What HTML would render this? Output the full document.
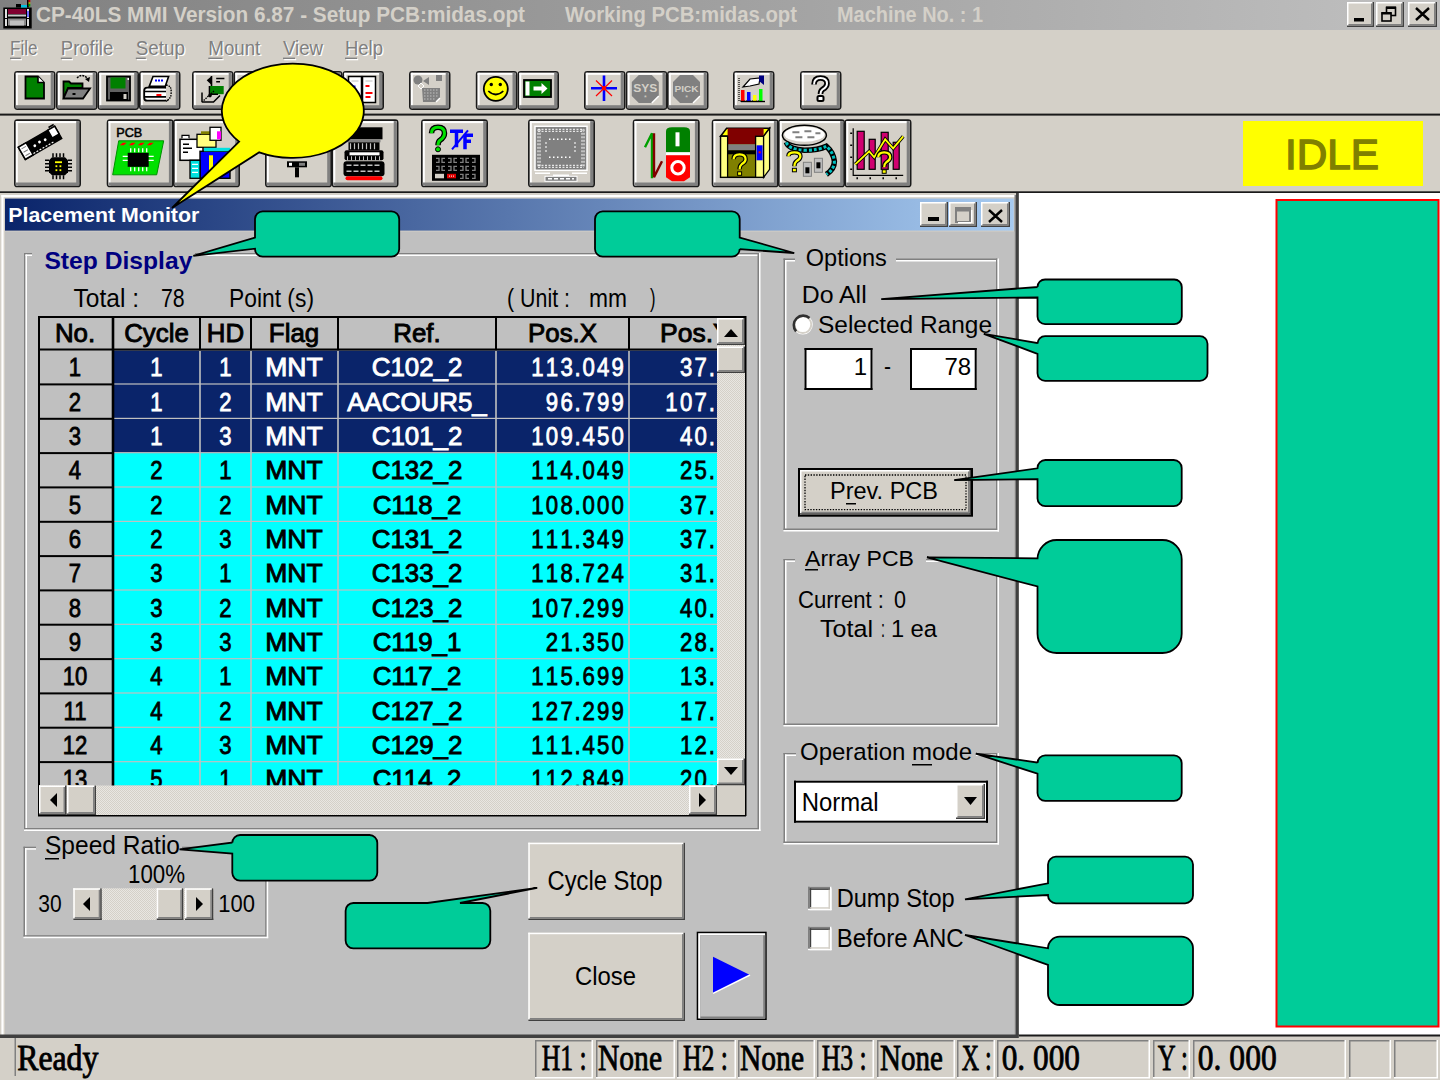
<!DOCTYPE html>
<html><head><meta charset="utf-8"><style>
*{margin:0;padding:0}
html,body{width:1440px;height:1080px;overflow:hidden;background:#d4d0c8}
svg{display:block}
</style></head><body>
<svg width="1440" height="1080" viewBox="0 0 1440 1080">
<defs>
<linearGradient id="gt" x1="0" x2="1" y1="0" y2="0"><stop offset="0" stop-color="#808080"/><stop offset="1" stop-color="#c0c0c0"/></linearGradient>
<linearGradient id="gc" x1="0" x2="1" y1="0" y2="0"><stop offset="0" stop-color="#0a246a"/><stop offset="1" stop-color="#a6caf0"/></linearGradient>
<pattern id="dith" width="2" height="2" patternUnits="userSpaceOnUse"><rect width="2" height="2" fill="#e8e6e2"/><rect width="1" height="1" fill="#d4d0c8"/><rect x="1" y="1" width="1" height="1" fill="#d4d0c8"/></pattern>
</defs>
<rect x="0.0" y="0.0" width="1440.0" height="30.0" fill="url(#gt)" />
<text x="36.0" y="21.9" font-family="Liberation Sans" font-size="21.22" font-weight="bold" fill="#d4d0c8" text-anchor="start" textLength="489.0" lengthAdjust="spacingAndGlyphs">CP-40LS MMI Version 6.87 - Setup PCB:midas.opt</text>
<text x="565.0" y="21.9" font-family="Liberation Sans" font-size="21.22" font-weight="bold" fill="#d4d0c8" text-anchor="start" textLength="232.0" lengthAdjust="spacingAndGlyphs">Working PCB:midas.opt</text>
<text x="837.0" y="21.9" font-family="Liberation Sans" font-size="21.22" font-weight="bold" fill="#d4d0c8" text-anchor="start" textLength="146.0" lengthAdjust="spacingAndGlyphs">Machine No. : 1</text>
<rect x="1347.0" y="2.0" width="27.0" height="25.0" fill="#d4d0c8" />
<rect x="1347.0" y="2.0" width="27.0" height="1.5" fill="#fff" />
<rect x="1347.0" y="2.0" width="1.5" height="25.0" fill="#fff" />
<rect x="1347.0" y="25.5" width="27.0" height="1.5" fill="#404040" />
<rect x="1372.5" y="2.0" width="1.5" height="25.0" fill="#404040" />
<rect x="1348.5" y="24.0" width="24.0" height="1.5" fill="#808080" />
<rect x="1371.0" y="3.5" width="1.5" height="22.0" fill="#808080" />
<rect x="1376.0" y="2.0" width="28.0" height="25.0" fill="#d4d0c8" />
<rect x="1376.0" y="2.0" width="28.0" height="1.5" fill="#fff" />
<rect x="1376.0" y="2.0" width="1.5" height="25.0" fill="#fff" />
<rect x="1376.0" y="25.5" width="28.0" height="1.5" fill="#404040" />
<rect x="1402.5" y="2.0" width="1.5" height="25.0" fill="#404040" />
<rect x="1377.5" y="24.0" width="25.0" height="1.5" fill="#808080" />
<rect x="1401.0" y="3.5" width="1.5" height="22.0" fill="#808080" />
<rect x="1408.0" y="2.0" width="29.0" height="25.0" fill="#d4d0c8" />
<rect x="1408.0" y="2.0" width="29.0" height="1.5" fill="#fff" />
<rect x="1408.0" y="2.0" width="1.5" height="25.0" fill="#fff" />
<rect x="1408.0" y="25.5" width="29.0" height="1.5" fill="#404040" />
<rect x="1435.5" y="2.0" width="1.5" height="25.0" fill="#404040" />
<rect x="1409.5" y="24.0" width="26.0" height="1.5" fill="#808080" />
<rect x="1434.0" y="3.5" width="1.5" height="22.0" fill="#808080" />
<rect x="1354.0" y="18.0" width="10.0" height="3.5" fill="#000" />
<rect x="1386.5" y="7.5" width="9" height="8" fill="none" stroke="#000" stroke-width="1.6"/><rect x="1386" y="6.5" width="10" height="2.5" fill="#000"/>
<rect x="1382" y="13" width="9" height="8" fill="#d4d0c8" stroke="#000" stroke-width="1.6"/><rect x="1381.5" y="12" width="10" height="2.5" fill="#000"/>
<path d="M1416,8 L1429,20 M1429,8 L1416,20" stroke="#000" stroke-width="2.4"/>
<g><rect x="3.3" y="7.5" width="28.4" height="21" fill="#000"/><rect x="8" y="9" width="18" height="5" fill="#800030"/><rect x="8" y="14.5" width="18" height="2" fill="#c8c8c8"/><rect x="8" y="18.5" width="18" height="7" fill="#8c8c8c"/><rect x="10" y="20.5" width="14" height="5" fill="#c0c0c0"/><rect x="5" y="9" width="2" height="17" fill="#e0e0e0"/><rect x="27" y="9" width="2" height="17" fill="#e0e0e0"/><rect x="27" y="11" width="2" height="6" fill="#7070ff"/><rect x="5" y="18" width="2" height="1" fill="#000"/><rect x="27" y="18" width="2" height="1" fill="#000"/><rect x="16" y="4" width="5" height="3.5" fill="#000"/><rect x="21" y="5" width="6" height="2.5" fill="#00c0e0"/><rect x="27" y="0" width="1.8" height="7.5" fill="#000"/><rect x="28.5" y="0" width="1.8" height="2" fill="#c00000"/><rect x="28.5" y="2" width="1.8" height="2" fill="#a0a000"/><rect x="28.5" y="4" width="1.8" height="2.5" fill="#00a000"/></g>
<text x="11.3" y="56.3" font-family="Liberation Sans" font-size="19.33" font-weight="normal" fill="#fff" text-anchor="start" textLength="27.5" lengthAdjust="spacingAndGlyphs">File</text>
<text x="10.0" y="55.0" font-family="Liberation Sans" font-size="19.33" font-weight="normal" fill="#808080" text-anchor="start" textLength="27.5" lengthAdjust="spacingAndGlyphs">File</text>
<rect x="11.2" y="58.9" width="10.8" height="1.4" fill="#fff" />
<rect x="10.0" y="57.6" width="10.8" height="1.4" fill="#808080" />
<text x="62.1" y="56.3" font-family="Liberation Sans" font-size="19.33" font-weight="normal" fill="#fff" text-anchor="start" textLength="52.5" lengthAdjust="spacingAndGlyphs">Profile</text>
<text x="60.8" y="55.0" font-family="Liberation Sans" font-size="19.33" font-weight="normal" fill="#808080" text-anchor="start" textLength="52.5" lengthAdjust="spacingAndGlyphs">Profile</text>
<rect x="62.0" y="58.9" width="11.0" height="1.4" fill="#fff" />
<rect x="60.8" y="57.6" width="11.0" height="1.4" fill="#808080" />
<text x="137.1" y="56.3" font-family="Liberation Sans" font-size="19.33" font-weight="normal" fill="#fff" text-anchor="start" textLength="49.2" lengthAdjust="spacingAndGlyphs">Setup</text>
<text x="135.8" y="55.0" font-family="Liberation Sans" font-size="19.33" font-weight="normal" fill="#808080" text-anchor="start" textLength="49.2" lengthAdjust="spacingAndGlyphs">Setup</text>
<rect x="137.0" y="58.9" width="10.0" height="1.4" fill="#fff" />
<rect x="135.8" y="57.6" width="10.0" height="1.4" fill="#808080" />
<text x="209.6" y="56.3" font-family="Liberation Sans" font-size="19.33" font-weight="normal" fill="#fff" text-anchor="start" textLength="52.0" lengthAdjust="spacingAndGlyphs">Mount</text>
<text x="208.3" y="55.0" font-family="Liberation Sans" font-size="19.33" font-weight="normal" fill="#808080" text-anchor="start" textLength="52.0" lengthAdjust="spacingAndGlyphs">Mount</text>
<rect x="209.5" y="58.9" width="14.2" height="1.4" fill="#fff" />
<rect x="208.3" y="57.6" width="14.2" height="1.4" fill="#808080" />
<text x="284.3" y="56.3" font-family="Liberation Sans" font-size="19.33" font-weight="normal" fill="#fff" text-anchor="start" textLength="40.0" lengthAdjust="spacingAndGlyphs">View</text>
<text x="283.0" y="55.0" font-family="Liberation Sans" font-size="19.33" font-weight="normal" fill="#808080" text-anchor="start" textLength="40.0" lengthAdjust="spacingAndGlyphs">View</text>
<rect x="284.2" y="58.9" width="12.0" height="1.4" fill="#fff" />
<rect x="283.0" y="57.6" width="12.0" height="1.4" fill="#808080" />
<text x="346.3" y="56.3" font-family="Liberation Sans" font-size="19.33" font-weight="normal" fill="#fff" text-anchor="start" textLength="38.0" lengthAdjust="spacingAndGlyphs">Help</text>
<text x="345.0" y="55.0" font-family="Liberation Sans" font-size="19.33" font-weight="normal" fill="#808080" text-anchor="start" textLength="38.0" lengthAdjust="spacingAndGlyphs">Help</text>
<rect x="346.2" y="58.9" width="12.0" height="1.4" fill="#fff" />
<rect x="345.0" y="57.6" width="12.0" height="1.4" fill="#808080" />
<rect x="14.9" y="71.9" width="39.7" height="37.2" rx="2.5" fill="#d4d0c8" stroke="#1a1a1a" stroke-width="1.8"/>
<rect x="15.8" y="72.8" width="37.9" height="2.0" fill="#fff" />
<rect x="15.8" y="72.8" width="2.0" height="35.4" fill="#fff" />
<rect x="15.8" y="105.2" width="37.9" height="3.0" fill="#808080" />
<rect x="50.7" y="72.8" width="3.0" height="35.4" fill="#808080" />
<rect x="56.9" y="71.9" width="39.7" height="37.2" rx="2.5" fill="#d4d0c8" stroke="#1a1a1a" stroke-width="1.8"/>
<rect x="57.8" y="72.8" width="37.9" height="2.0" fill="#fff" />
<rect x="57.8" y="72.8" width="2.0" height="35.4" fill="#fff" />
<rect x="57.8" y="105.2" width="37.9" height="3.0" fill="#808080" />
<rect x="92.7" y="72.8" width="3.0" height="35.4" fill="#808080" />
<rect x="98.4" y="71.9" width="39.7" height="37.2" rx="2.5" fill="#d4d0c8" stroke="#1a1a1a" stroke-width="1.8"/>
<rect x="99.3" y="72.8" width="37.9" height="2.0" fill="#fff" />
<rect x="99.3" y="72.8" width="2.0" height="35.4" fill="#fff" />
<rect x="99.3" y="105.2" width="37.9" height="3.0" fill="#808080" />
<rect x="134.2" y="72.8" width="3.0" height="35.4" fill="#808080" />
<rect x="139.9" y="71.9" width="39.7" height="37.2" rx="2.5" fill="#d4d0c8" stroke="#1a1a1a" stroke-width="1.8"/>
<rect x="140.8" y="72.8" width="37.9" height="2.0" fill="#fff" />
<rect x="140.8" y="72.8" width="2.0" height="35.4" fill="#fff" />
<rect x="140.8" y="105.2" width="37.9" height="3.0" fill="#808080" />
<rect x="175.7" y="72.8" width="3.0" height="35.4" fill="#808080" />
<rect x="192.9" y="71.9" width="39.7" height="37.2" rx="2.5" fill="#d4d0c8" stroke="#1a1a1a" stroke-width="1.8"/>
<rect x="193.8" y="72.8" width="37.9" height="2.0" fill="#fff" />
<rect x="193.8" y="72.8" width="2.0" height="35.4" fill="#fff" />
<rect x="193.8" y="105.2" width="37.9" height="3.0" fill="#808080" />
<rect x="228.7" y="72.8" width="3.0" height="35.4" fill="#808080" />
<rect x="234.4" y="71.9" width="39.7" height="37.2" rx="2.5" fill="#d4d0c8" stroke="#1a1a1a" stroke-width="1.8"/>
<rect x="235.3" y="72.8" width="37.9" height="2.0" fill="#fff" />
<rect x="235.3" y="72.8" width="2.0" height="35.4" fill="#fff" />
<rect x="235.3" y="105.2" width="37.9" height="3.0" fill="#808080" />
<rect x="270.2" y="72.8" width="3.0" height="35.4" fill="#808080" />
<rect x="301.9" y="71.9" width="39.7" height="37.2" rx="2.5" fill="#d4d0c8" stroke="#1a1a1a" stroke-width="1.8"/>
<rect x="302.8" y="72.8" width="37.9" height="2.0" fill="#fff" />
<rect x="302.8" y="72.8" width="2.0" height="35.4" fill="#fff" />
<rect x="302.8" y="105.2" width="37.9" height="3.0" fill="#808080" />
<rect x="337.7" y="72.8" width="3.0" height="35.4" fill="#808080" />
<rect x="343.4" y="71.9" width="39.7" height="37.2" rx="2.5" fill="#d4d0c8" stroke="#1a1a1a" stroke-width="1.8"/>
<rect x="344.3" y="72.8" width="37.9" height="2.0" fill="#fff" />
<rect x="344.3" y="72.8" width="2.0" height="35.4" fill="#fff" />
<rect x="344.3" y="105.2" width="37.9" height="3.0" fill="#808080" />
<rect x="379.2" y="72.8" width="3.0" height="35.4" fill="#808080" />
<rect x="409.9" y="71.9" width="39.7" height="37.2" rx="2.5" fill="#d4d0c8" stroke="#1a1a1a" stroke-width="1.8"/>
<rect x="410.8" y="72.8" width="37.9" height="2.0" fill="#fff" />
<rect x="410.8" y="72.8" width="2.0" height="35.4" fill="#fff" />
<rect x="410.8" y="105.2" width="37.9" height="3.0" fill="#808080" />
<rect x="445.7" y="72.8" width="3.0" height="35.4" fill="#808080" />
<rect x="476.7" y="71.9" width="39.7" height="37.2" rx="2.5" fill="#d4d0c8" stroke="#1a1a1a" stroke-width="1.8"/>
<rect x="477.6" y="72.8" width="37.9" height="2.0" fill="#fff" />
<rect x="477.6" y="72.8" width="2.0" height="35.4" fill="#fff" />
<rect x="477.6" y="105.2" width="37.9" height="3.0" fill="#808080" />
<rect x="512.5" y="72.8" width="3.0" height="35.4" fill="#808080" />
<rect x="518.4" y="71.9" width="39.7" height="37.2" rx="2.5" fill="#d4d0c8" stroke="#1a1a1a" stroke-width="1.8"/>
<rect x="519.3" y="72.8" width="37.9" height="2.0" fill="#fff" />
<rect x="519.3" y="72.8" width="2.0" height="35.4" fill="#fff" />
<rect x="519.3" y="105.2" width="37.9" height="3.0" fill="#808080" />
<rect x="554.2" y="72.8" width="3.0" height="35.4" fill="#808080" />
<rect x="584.9" y="71.9" width="39.7" height="37.2" rx="2.5" fill="#d4d0c8" stroke="#1a1a1a" stroke-width="1.8"/>
<rect x="585.8" y="72.8" width="37.9" height="2.0" fill="#fff" />
<rect x="585.8" y="72.8" width="2.0" height="35.4" fill="#fff" />
<rect x="585.8" y="105.2" width="37.9" height="3.0" fill="#808080" />
<rect x="620.7" y="72.8" width="3.0" height="35.4" fill="#808080" />
<rect x="626.7" y="71.9" width="39.7" height="37.2" rx="2.5" fill="#d4d0c8" stroke="#1a1a1a" stroke-width="1.8"/>
<rect x="627.6" y="72.8" width="37.9" height="2.0" fill="#fff" />
<rect x="627.6" y="72.8" width="2.0" height="35.4" fill="#fff" />
<rect x="627.6" y="105.2" width="37.9" height="3.0" fill="#808080" />
<rect x="662.5" y="72.8" width="3.0" height="35.4" fill="#808080" />
<rect x="667.9" y="71.9" width="39.7" height="37.2" rx="2.5" fill="#d4d0c8" stroke="#1a1a1a" stroke-width="1.8"/>
<rect x="668.8" y="72.8" width="37.9" height="2.0" fill="#fff" />
<rect x="668.8" y="72.8" width="2.0" height="35.4" fill="#fff" />
<rect x="668.8" y="105.2" width="37.9" height="3.0" fill="#808080" />
<rect x="703.7" y="72.8" width="3.0" height="35.4" fill="#808080" />
<rect x="733.9" y="71.9" width="39.7" height="37.2" rx="2.5" fill="#d4d0c8" stroke="#1a1a1a" stroke-width="1.8"/>
<rect x="734.8" y="72.8" width="37.9" height="2.0" fill="#fff" />
<rect x="734.8" y="72.8" width="2.0" height="35.4" fill="#fff" />
<rect x="734.8" y="105.2" width="37.9" height="3.0" fill="#808080" />
<rect x="769.7" y="72.8" width="3.0" height="35.4" fill="#808080" />
<rect x="800.9" y="71.9" width="39.7" height="37.2" rx="2.5" fill="#d4d0c8" stroke="#1a1a1a" stroke-width="1.8"/>
<rect x="801.8" y="72.8" width="37.9" height="2.0" fill="#fff" />
<rect x="801.8" y="72.8" width="2.0" height="35.4" fill="#fff" />
<rect x="801.8" y="105.2" width="37.9" height="3.0" fill="#808080" />
<rect x="836.7" y="72.8" width="3.0" height="35.4" fill="#808080" />
<rect x="0.0" y="113.6" width="1440.0" height="2.0" fill="#1a1a1a" />
<rect x="14.9" y="120.2" width="65.2" height="66.2" rx="2.5" fill="#d4d0c8" stroke="#1a1a1a" stroke-width="1.8"/>
<rect x="15.8" y="121.1" width="63.4" height="2.0" fill="#fff" />
<rect x="15.8" y="121.1" width="2.0" height="64.4" fill="#fff" />
<rect x="15.8" y="182.5" width="63.4" height="3.0" fill="#808080" />
<rect x="76.2" y="121.1" width="3.0" height="64.4" fill="#808080" />
<rect x="107.6" y="120.2" width="65.2" height="66.2" rx="2.5" fill="#d4d0c8" stroke="#1a1a1a" stroke-width="1.8"/>
<rect x="108.5" y="121.1" width="63.4" height="2.0" fill="#fff" />
<rect x="108.5" y="121.1" width="2.0" height="64.4" fill="#fff" />
<rect x="108.5" y="182.5" width="63.4" height="3.0" fill="#808080" />
<rect x="168.9" y="121.1" width="3.0" height="64.4" fill="#808080" />
<rect x="173.9" y="120.2" width="65.2" height="66.2" rx="2.5" fill="#d4d0c8" stroke="#1a1a1a" stroke-width="1.8"/>
<rect x="174.8" y="121.1" width="63.4" height="2.0" fill="#fff" />
<rect x="174.8" y="121.1" width="2.0" height="64.4" fill="#fff" />
<rect x="174.8" y="182.5" width="63.4" height="3.0" fill="#808080" />
<rect x="235.2" y="121.1" width="3.0" height="64.4" fill="#808080" />
<rect x="265.9" y="120.2" width="65.2" height="66.2" rx="2.5" fill="#d4d0c8" stroke="#1a1a1a" stroke-width="1.8"/>
<rect x="266.8" y="121.1" width="63.4" height="2.0" fill="#fff" />
<rect x="266.8" y="121.1" width="2.0" height="64.4" fill="#fff" />
<rect x="266.8" y="182.5" width="63.4" height="3.0" fill="#808080" />
<rect x="327.2" y="121.1" width="3.0" height="64.4" fill="#808080" />
<rect x="332.4" y="120.2" width="65.2" height="66.2" rx="2.5" fill="#d4d0c8" stroke="#1a1a1a" stroke-width="1.8"/>
<rect x="333.3" y="121.1" width="63.4" height="2.0" fill="#fff" />
<rect x="333.3" y="121.1" width="2.0" height="64.4" fill="#fff" />
<rect x="333.3" y="182.5" width="63.4" height="3.0" fill="#808080" />
<rect x="393.7" y="121.1" width="3.0" height="64.4" fill="#808080" />
<rect x="421.9" y="120.2" width="65.2" height="66.2" rx="2.5" fill="#d4d0c8" stroke="#1a1a1a" stroke-width="1.8"/>
<rect x="422.8" y="121.1" width="63.4" height="2.0" fill="#fff" />
<rect x="422.8" y="121.1" width="2.0" height="64.4" fill="#fff" />
<rect x="422.8" y="182.5" width="63.4" height="3.0" fill="#808080" />
<rect x="483.2" y="121.1" width="3.0" height="64.4" fill="#808080" />
<rect x="528.9" y="120.2" width="65.2" height="66.2" rx="2.5" fill="#d4d0c8" stroke="#1a1a1a" stroke-width="1.8"/>
<rect x="529.8" y="121.1" width="63.4" height="2.0" fill="#fff" />
<rect x="529.8" y="121.1" width="2.0" height="64.4" fill="#fff" />
<rect x="529.8" y="182.5" width="63.4" height="3.0" fill="#808080" />
<rect x="590.2" y="121.1" width="3.0" height="64.4" fill="#808080" />
<rect x="633.6" y="120.2" width="65.2" height="66.2" rx="2.5" fill="#d4d0c8" stroke="#1a1a1a" stroke-width="1.8"/>
<rect x="634.5" y="121.1" width="63.4" height="2.0" fill="#fff" />
<rect x="634.5" y="121.1" width="2.0" height="64.4" fill="#fff" />
<rect x="634.5" y="182.5" width="63.4" height="3.0" fill="#808080" />
<rect x="694.9" y="121.1" width="3.0" height="64.4" fill="#808080" />
<rect x="712.6" y="120.2" width="65.2" height="66.2" rx="2.5" fill="#d4d0c8" stroke="#1a1a1a" stroke-width="1.8"/>
<rect x="713.5" y="121.1" width="63.4" height="2.0" fill="#fff" />
<rect x="713.5" y="121.1" width="2.0" height="64.4" fill="#fff" />
<rect x="713.5" y="182.5" width="63.4" height="3.0" fill="#808080" />
<rect x="773.9" y="121.1" width="3.0" height="64.4" fill="#808080" />
<rect x="778.9" y="120.2" width="65.2" height="66.2" rx="2.5" fill="#d4d0c8" stroke="#1a1a1a" stroke-width="1.8"/>
<rect x="779.8" y="121.1" width="63.4" height="2.0" fill="#fff" />
<rect x="779.8" y="121.1" width="2.0" height="64.4" fill="#fff" />
<rect x="779.8" y="182.5" width="63.4" height="3.0" fill="#808080" />
<rect x="840.2" y="121.1" width="3.0" height="64.4" fill="#808080" />
<rect x="845.4" y="120.2" width="65.2" height="66.2" rx="2.5" fill="#d4d0c8" stroke="#1a1a1a" stroke-width="1.8"/>
<rect x="846.3" y="121.1" width="63.4" height="2.0" fill="#fff" />
<rect x="846.3" y="121.1" width="2.0" height="64.4" fill="#fff" />
<rect x="846.3" y="182.5" width="63.4" height="3.0" fill="#808080" />
<rect x="906.7" y="121.1" width="3.0" height="64.4" fill="#808080" />
<g transform="translate(14.0,71.0)"><path d="M11.5,5.5 H24 L30,11.5 V27.5 H11.5 Z" fill="#008000" stroke="#000" stroke-width="1.8"/><path d="M24,5.5 V11.5 H30" fill="#fff" stroke="#000" stroke-width="1.6"/></g>
<g transform="translate(56.0,71.0)"><path d="M7.5,10.5 H13 L15,12.5 H26.5 V17 H12 L7.5,27.5 Z" fill="#008000" stroke="#000" stroke-width="1.8"/><path d="M12,17.5 H34 L27,27.5 H7.5 Z" fill="#808080" stroke="#000" stroke-width="1.8"/><rect x="16.5" y="22" width="3" height="2" fill="#000"/><path d="M21,7 Q26,2 31,7" fill="none" stroke="#000" stroke-width="1.5" stroke-dasharray="2,1"/><path d="M29,8 L34,6 L33,11 Z" fill="#000"/></g>
<g transform="translate(97.5,71.0)"><rect x="9.5" y="5.5" width="23" height="24" fill="#606060" stroke="#000" stroke-width="1.8"/><rect x="13" y="6.5" width="15" height="11" fill="#008000"/><rect x="12.5" y="21" width="18" height="8.5" fill="#000"/><rect x="26" y="23" width="3" height="5" fill="#d4d0c8"/><rect x="30" y="7" width="1.5" height="2" fill="#fff"/></g>
<g transform="translate(139.0,71.0)"><path d="M14,5.5 H29.6 L26.2,15.4 H10.2 Z" fill="#fff" stroke="#000" stroke-width="1.6"/><path d="M16,9.5 H24" stroke="#0000ff" stroke-width="2" stroke-dasharray="2,1"/><rect x="5.2" y="16.7" width="24" height="13" rx="3" fill="#fff" stroke="#000" stroke-width="1.8"/><path d="M5.5,20.5 H29 M5.5,25.9 H29" stroke="#000" stroke-width="1.6"/><rect x="17.4" y="23" width="5" height="2" fill="#ff0000"/><path d="M27,14 Q33,15 32,21 Q33,27 27,30" fill="#d4d0c8" stroke="#000" stroke-width="1.4" stroke-dasharray="1.5,1"/></g>
<g transform="translate(192.0,71.0)"><path d="M14.7,9.2 L19.5,5.2 V14 Z" fill="#000"/><path d="M19.5,5 V20" stroke="#000" stroke-width="1.6"/><path d="M24.2,7.5 H32.4 M24.2,10.8 H28" stroke="#000" stroke-width="1.5"/><rect x="17.4" y="15" width="14.3" height="8.2" fill="#008000"/><path d="M17.4,15 V23.2 H26" fill="none" stroke="#000" stroke-width="1.4"/><path d="M22,20 L11,30" stroke="#000" stroke-width="1.4" stroke-dasharray="1.5,1"/><path d="M10,21.5 V31.3 M10,31 H21.5 L28,24.5" fill="none" stroke="#000" stroke-width="1.5"/><circle cx="18" cy="24.6" r="1.8" fill="#000"/></g>
<g transform="translate(342.5,71.0)"><rect x="6" y="5.5" width="13" height="26" fill="#fff" stroke="#000" stroke-width="1.5"/><rect x="20" y="5.5" width="13" height="26" fill="#fff" stroke="#000" stroke-width="1.5"/><path d="M19.5,6 V31" stroke="#000" stroke-width="2" stroke-dasharray="2,1.5"/><rect x="9" y="14.5" width="4" height="2" fill="#0000ff"/><rect x="23" y="14" width="4" height="2" fill="#ff0000"/><rect x="23" y="21" width="7" height="2" fill="#ff0000"/><rect x="23" y="25" width="5" height="2" fill="#ff0000"/><path d="M9,10 H16 M23,10 H30 M9,21 H16 M9,26 H16" stroke="#c0c0c0" stroke-width="1"/></g>
<g transform="translate(409.0,71.0)"><circle cx="9" cy="9" r="4.5" fill="#808080"/><rect x="27" y="4" width="6" height="6" fill="#808080"/><path d="M14,10 L20,6 V14 Z" fill="#808080"/><path d="M13,17 H31 V27 L27,31 H14 Z" fill="#808080"/><path d="M27,31 L31,27" stroke="#fff" stroke-width="1.5"/><path d="M15,19 H29 M15,22 H29 M15,25 H29 M15,28 H26" stroke="#c0c0c0" stroke-width="1" stroke-dasharray="1.5,1.5"/><path d="M9,15 L12,12 L15,15 L12,18 Z" fill="none" stroke="#fff" stroke-width="1"/></g>
<g transform="translate(475.8,71.0)"><circle cx="20" cy="17.8" r="12" fill="#ffff00" stroke="#000" stroke-width="1.8"/><circle cx="15.5" cy="13.5" r="1.7" fill="#000"/><circle cx="24.5" cy="13.5" r="1.7" fill="#000"/><path d="M12.5,20 Q20,27 27.5,20" fill="none" stroke="#000" stroke-width="1.7"/></g>
<g transform="translate(517.5,71.0)"><rect x="6.5" y="9" width="27" height="17" fill="#008000" stroke="#000" stroke-width="1.8"/><rect x="8" y="10.5" width="4" height="14" fill="#fff"/><path d="M16,15.5 H24 V12 L30,17.5 L24,23 V19.5 H16 Z" fill="#fff"/></g>
<g transform="translate(584.0,71.0)"><path d="M7,17.3 H33 M20,4.5 V30" stroke="#0000ff" stroke-width="2.6"/><path d="M12,9.5 L28,25 M28,9.5 L12,25" stroke="#ff0000" stroke-width="1.2"/><circle cx="20" cy="17.3" r="2.2" fill="#ff0000"/></g>
<g transform="translate(625.8,71.0)"><path d="M13,4 H26 L33,11 V25 L26,32 H13 L6,25 V11 Z" fill="#808080"/><path d="M26,32 L33,25" stroke="#fff" stroke-width="1.5"/><text x="19.5" y="21" font-family="Liberation Sans" font-size="10.5" font-weight="bold" fill="#d4d0c8" text-anchor="middle" textLength="24" lengthAdjust="spacingAndGlyphs">SYS</text><text x="19.5" y="29" font-family="Liberation Sans" font-size="7" fill="#d4d0c8" text-anchor="middle">*</text></g>
<g transform="translate(667.0,71.0)"><path d="M13,4 H26 L33,11 V25 L26,32 H13 L6,25 V11 Z" fill="#808080"/><path d="M26,32 L33,25" stroke="#fff" stroke-width="1.5"/><text x="19.5" y="21" font-family="Liberation Sans" font-size="9.5" font-weight="bold" fill="#d4d0c8" text-anchor="middle" textLength="24" lengthAdjust="spacingAndGlyphs">PICK</text><text x="19.5" y="29" font-family="Liberation Sans" font-size="7" fill="#d4d0c8" text-anchor="middle">*</text></g>
<g transform="translate(733.0,71.0)"><path d="M6,7 V30 H26" fill="none" stroke="#000" stroke-width="1.2" stroke-dasharray="1,1"/><rect x="8" y="19" width="3.5" height="11" fill="#ff0000"/><rect x="14" y="21" width="3.5" height="9" fill="#0000ff"/><rect x="20" y="24" width="3.5" height="6" fill="#ffff00"/><rect x="26" y="18" width="3.5" height="12" fill="#00ff00"/><path d="M8,30.5 H32" stroke="#000" stroke-width="1.4"/><path d="M10,16 L17,8 L27,7 L26,13 L17,15 Z" fill="#fff" stroke="#000" stroke-width="1.2"/><path d="M26,4.5 H31 V14 L26,10 Z" fill="#000080"/></g>
<g transform="translate(800.0,71.0)"><path d="M14,13.5 Q14,7 20.5,7 Q27,7 27,12.5 Q27,16 22.5,18.5 Q20.5,20 20.5,23" fill="none" stroke="#000" stroke-width="5.6"/><path d="M14,13.5 Q14,7 20.5,7 Q27,7 27,12.5 Q27,16 22.5,18.5 Q20.5,20 20.5,23" fill="none" stroke="#fff" stroke-width="2"/><rect x="17.5" y="25" width="6" height="5" rx="1.5" fill="#fff" stroke="#000" stroke-width="2"/></g>
<g transform="translate(14.0,119.3)"><g transform="translate(26,23.5) rotate(-30)"><rect x="-21" y="-7" width="42" height="14" fill="#000" stroke="#000" stroke-width="1.5"/><rect x="-21" y="-7" width="9" height="14" fill="#fff" stroke="#000" stroke-width="1.5"/><path d="M-19,-4 H-14 M-19,0 H-14 M-19,4 H-14" stroke="#808080" stroke-width="1"/><rect x="13" y="-7" width="8" height="9" fill="#fff" stroke="#000" stroke-width="1.5"/><path d="M15,-9 L21,-9" stroke="#000" stroke-width="1.5"/><circle cx="-6" cy="0" r="1.4" fill="#fff"/><circle cx="0" cy="-1" r="1.4" fill="#fff"/><circle cx="6" cy="0" r="1.4" fill="#fff"/><path d="M-11,6 H12" stroke="#fff" stroke-width="1.2" stroke-dasharray="2,1.5"/></g><path d="M38,38 H51 L54,41 V53 L51,56 H38 L35,53 V41 Z" fill="#000"/><path d="M39,34 V38 M42.5,34 V38 M46,34 V38 M49.5,34 V38 M39,56 V60 M42.5,56 V60 M46,56 V60 M49.5,56 V60 M31,41 H35 M31,44.5 H35 M31,48 H35 M31,51.5 H35 M54,41 H58 M54,44.5 H58 M54,48 H58 M54,51.5 H58" stroke="#000" stroke-width="1.5"/><rect x="41" y="42" width="7" height="1.8" fill="#ffff00"/><rect x="41.5" y="46" width="1.8" height="1.8" fill="#ffff00"/><rect x="45.5" y="46" width="1.8" height="1.8" fill="#ffff00"/><rect x="41.5" y="50" width="1.8" height="1.8" fill="#ffff00"/><rect x="45.5" y="50" width="1.8" height="1.8" fill="#ffff00"/></g>
<g transform="translate(106.7,119.3)"><text x="9.5" y="17.8" font-family="Liberation Sans" font-size="12" fill="#000" stroke="#000" stroke-width="0.5" textLength="26" lengthAdjust="spacingAndGlyphs">PCB</text><path d="M12,21.5 H57 L50,55.5 H6 Z" fill="#00e000" stroke="#009000" stroke-width="1"/><path d="M13,26 L16,23.5 H20 L17,26 Z M22,26 L25,23.5 H29 L26,26 Z M31,26 L34,23.5 H38 L35,26 Z M40,26 L43,23.5 H47 L44,26 Z" fill="#ff0000"/><rect x="21" y="33.5" width="21" height="14" fill="#000"/><path d="M24,29 V33 M28,29 V33 M32,29 V33 M36,29 V33 M40,29 V33 M24,48 V52 M28,48 V52 M32,48 V52 M36,48 V52 M40,48 V52 M16,37 H21 M16,41 H21 M42,37 H47 M42,41 H47" stroke="#fff" stroke-width="1.3"/></g>
<g transform="translate(173.0,119.3)"><rect x="7" y="20" width="23" height="21" fill="#fff" stroke="#000" stroke-width="1.5"/><path d="M9,19 V16 H16 V19" fill="#fff" stroke="#000" stroke-width="1.2"/><path d="M10,25 H16 M10,29 H19 M10,33 H15" stroke="#000" stroke-width="1.4"/><rect x="24" y="15" width="19" height="13" fill="#ffff80" stroke="#000" stroke-width="1.3"/><rect x="28" y="12" width="9" height="3" fill="#808000"/><rect x="37" y="8" width="11" height="13" fill="#fff" stroke="#000" stroke-width="1.3"/><rect x="44" y="12" width="4" height="8" fill="#ff00ff"/><rect x="27" y="32" width="30" height="27" fill="#0000ff" stroke="#000" stroke-width="1.4"/><rect x="31" y="28.5" width="26" height="3.5" fill="#00e0e0"/><rect x="36" y="36" width="4" height="21" fill="#ffff00"/><rect x="17" y="41" width="10" height="18" fill="#00e0e0" stroke="#000" stroke-width="1.3"/><path d="M19,45 H25 M19,49 H25 M19,53 H25" stroke="#fff" stroke-width="1.3"/></g>
<g transform="translate(265.0,119.3)"><rect x="22" y="42" width="20" height="6" fill="#000"/><rect x="24" y="43.5" width="3" height="3" fill="#fff"/><rect x="34" y="43.5" width="6" height="3" fill="#808080"/><rect x="30" y="48" width="4" height="10" fill="#000"/></g>
<g transform="translate(331.5,119.3)"><rect x="14" y="8" width="37" height="12" fill="#000"/><rect x="16" y="20" width="33" height="3" fill="#808080"/><rect x="17" y="23" width="31" height="8" fill="#000"/><path d="M19,24 V30 M23,24 V30 M27,24 V30 M31,24 V30 M35,24 V30 M39,24 V30 M43,24 V30" stroke="#c0c0c0" stroke-width="1.2"/><rect x="13" y="31" width="39" height="10" rx="2" fill="#000"/><rect x="18" y="33" width="30" height="3" fill="#fff"/><path d="M16,37 V41 M20,37 V41 M24,37 V41 M28,37 V41 M32,37 V41 M36,37 V41 M40,37 V41 M44,37 V41 M48,37 V41" stroke="#c0c0c0" stroke-width="1"/><rect x="12" y="42" width="41" height="15" rx="3" fill="#000"/><path d="M15,46 H50 M15,52 H50" stroke="#c0c0c0" stroke-width="1.5" stroke-dasharray="5,2"/><rect x="14" y="57" width="37" height="4" rx="2" fill="#ff0000"/></g>
<g transform="translate(421.0,119.3)"><path d="M10.5,14 Q10.5,8 17,8 Q23.5,8 23.5,14 Q23.5,18 19,21 Q17,22.5 17,26" fill="none" stroke="#000" stroke-width="5.5"/><path d="M10.5,14 Q10.5,8 17,8 Q23.5,8 23.5,14 Q23.5,18 19,21 Q17,22.5 17,26" fill="none" stroke="#00e000" stroke-width="3"/><circle cx="17" cy="30" r="2.5" fill="#00e000" stroke="#000" stroke-width="1"/><path d="M29,12 H42 M35.5,12 V28" stroke="#0000ff" stroke-width="3.5"/><path d="M31,30 L47,11" stroke="#0000ff" stroke-width="2"/><path d="M44,16 H52 M44,16 V30 M44,22 H50" stroke="#0000ff" stroke-width="3.5"/><rect x="11" y="35.5" width="48" height="26" fill="#000"/><g fill="none" stroke="#808080" stroke-width="1.3"><path d="M15,39 H18 V43 H15 M24,39 H21 V43 H24 M27,39 H30 V43 H27 M36,39 H33 V43 H36 M39,39 H42 V43 H39 M48,39 H45 V43 H48 M51,39 H54 V43 H51"/><path d="M15,47 H18 V51 H15 M24,47 H21 V51 H24 M27,47 H30 V51 H27 M36,47 H33 V51 H36 M39,47 H42 V51 H39 M48,47 H45 V51 H48 M51,47 H54 V51 H51"/><path d="M39,55 H42 V59 H39 M48,55 H45 V59 H48 M51,55 H54 V59 H51"/></g><rect x="14" y="54.5" width="9" height="4.5" fill="#d4d0c8"/><rect x="26" y="54.5" width="9" height="4.5" fill="#e00000"/><path d="M28,56.8 H33" stroke="#fff" stroke-width="1" stroke-dasharray="1,1"/></g>
<g transform="translate(528.0,119.3)"><rect x="7" y="7" width="52" height="44" fill="#808080" stroke="#fff" stroke-width="1.5"/><path d="M10,10 H56 M10,12 H56 M10,48 H56 M10,46 H56 M10,10 V48 M12,10 V48 M56,10 V48 M54,10 V48" stroke="#fff" stroke-width="1" stroke-dasharray="2,1.5"/><path d="M21,20 H44 M21,38 H44 M18,23 V35 M47,23 V35" stroke="#fff" stroke-width="1.4" stroke-dasharray="1.5,2.5"/><path d="M7,54 H22 M44,54 H59 M25,56 H41" stroke="#fff" stroke-width="1.5"/><rect x="17" y="57" width="32" height="5" fill="#808080" stroke="#fff" stroke-width="1"/><path d="M20,59.5 H46" stroke="#fff" stroke-width="1.5" stroke-dasharray="4,2"/></g>
<g transform="translate(632.0,119.3)"><path d="M13,28 L20,14 V59" fill="none" stroke="#00a000" stroke-width="2.4"/><path d="M22,14 V58 L30,42" fill="none" stroke="#800000" stroke-width="2.4"/><path d="M34,12 Q34,8 40,8 H52 Q58,8 58,12 V33 H34 Z" fill="#008000"/><rect x="43.5" y="13" width="4" height="14" fill="#fff"/><rect x="34" y="33" width="24" height="3" fill="#fff"/><path d="M34,36 H58 V58 L52,62 H40 L34,58 Z" fill="#ff0000"/><circle cx="46" cy="48.5" r="6.2" fill="none" stroke="#fff" stroke-width="3"/><circle cx="46" cy="48.5" r="2" fill="#ff0000"/></g>
<g transform="translate(711.6,119.3)"><path d="M9,17 L15,9 H58 L52,17 Z" fill="#ffff00" stroke="#000" stroke-width="1.5"/><rect x="9" y="17" width="43" height="41" fill="#808000" stroke="#000" stroke-width="1.5"/><rect x="16" y="9" width="36" height="16" fill="#800000"/><rect x="16" y="25" width="36" height="6" fill="#808080"/><rect x="16" y="31" width="36" height="4" fill="#000"/><rect x="9" y="17" width="7" height="41" fill="#ffff80" stroke="#000" stroke-width="1.3"/><rect x="44" y="17" width="8" height="41" fill="#ffff80" stroke="#000" stroke-width="1.3"/><path d="M52,17 L58,9 V50 L52,58 Z" fill="#ffff80" stroke="#000" stroke-width="1.3"/><rect x="45" y="26" width="6" height="15" fill="#0000ff"/><rect x="47" y="32" width="2" height="2" fill="#ff0000"/><path d="M22,40 Q22,35 28,35 Q34,35 34,40 Q34,43 30,45 Q28,46.5 28,50" fill="none" stroke="#000" stroke-width="4.5"/><path d="M22,40 Q22,35 28,35 Q34,35 34,40 Q34,43 30,45 Q28,46.5 28,50" fill="none" stroke="#ffff00" stroke-width="2.2"/><rect x="26" y="52.5" width="4" height="3.5" fill="#ffff00" stroke="#000" stroke-width="1"/></g>
<g transform="translate(778.4,119.3)"><ellipse cx="26" cy="16" rx="22" ry="10" fill="#d4d0c8" stroke="#000" stroke-width="1.5"/><ellipse cx="26" cy="15" rx="20" ry="7.5" fill="#fff"/><path d="M14,13 H21 M26,12 H33 M17,18 H24 M29,18 H36 M37,14 H42" stroke="#808080" stroke-width="2"/><path d="M8,23 Q10,30 26,31 Q40,31 48,27 Q55,33 56,42 Q56,50 48,55" fill="none" stroke="#000" stroke-width="5.5"/><path d="M8,23 Q10,30 26,31 Q40,31 48,27 Q55,33 56,42 Q56,50 48,55" fill="none" stroke="#00c0c0" stroke-width="3" stroke-dasharray="3,2"/><path d="M10,37 Q10,33 16,33 Q22,33 22,37 Q22,40 18,42 Q16,43.5 16,47" fill="none" stroke="#000" stroke-width="4.5"/><path d="M10,37 Q10,33 16,33 Q22,33 22,37 Q22,40 18,42 Q16,43.5 16,47" fill="none" stroke="#ffff00" stroke-width="2.2"/><rect x="14" y="49" width="4" height="3.5" fill="#ffff00" stroke="#000" stroke-width="1"/><rect x="25" y="43" width="8" height="14" fill="#c0c0c0" stroke="#808080" stroke-width="1"/><rect x="27" y="48" width="4" height="6" fill="#000"/><rect x="36" y="39" width="8" height="14" fill="#c0c0c0" stroke="#808080" stroke-width="1"/><rect x="38" y="43" width="4" height="6" fill="#000"/></g>
<g transform="translate(845.2,119.3)"><path d="M8,9 V56 H58" fill="none" stroke="#000" stroke-width="1.2"/><path d="M5,14 H7 M5,26 H7 M5,38 H7 M5,50 H7 M12,58 V60 M25,58 V60 M38,58 V60 M51,58 V60" stroke="#000" stroke-width="1.5"/><rect x="12" y="12" width="7" height="38" fill="#d00070" stroke="#000" stroke-width="1.2"/><rect x="24" y="20" width="6" height="30" fill="#d00070" stroke="#000" stroke-width="1.2"/><rect x="36" y="13" width="7" height="37" fill="#d00070" stroke="#000" stroke-width="1.2"/><rect x="48" y="23" width="6" height="27" fill="#d00070" stroke="#000" stroke-width="1.2"/><path d="M10,45 L24,32 L29,38 L40,20 L48,29 L58,17" fill="none" stroke="#000" stroke-width="3.5"/><path d="M10,45 L24,32 L29,38 L40,20 L48,29 L58,17" fill="none" stroke="#ffff00" stroke-width="1.8"/><path d="M33,38 Q33,33 39,33 Q45,33 45,38 Q45,41 41,43 Q39,44.5 39,48" fill="none" stroke="#000" stroke-width="4.5"/><path d="M33,38 Q33,33 39,33 Q45,33 45,38 Q45,41 41,43 Q39,44.5 39,48" fill="none" stroke="#ffff00" stroke-width="2.2"/><rect x="37" y="50.5" width="4" height="3.5" fill="#ffff00" stroke="#000" stroke-width="1"/></g>
<rect x="1243.0" y="121.0" width="180.0" height="65.0" fill="#ffff00" />
<text x="1285.0" y="169.2" font-family="Liberation Sans" font-size="42.73" font-weight="normal" fill="#808000" text-anchor="start" textLength="94.0" lengthAdjust="spacingAndGlyphs" stroke="#808000" stroke-width="1.4">IDLE</text>
<rect x="0.0" y="191.3" width="1440.0" height="2.3" fill="#1a1a1a" />
<rect x="0.0" y="193.0" width="1440.0" height="842.0" fill="#fff" />
<rect x="1276.5" y="200.0" width="162.0" height="826.5" fill="#00cc99" stroke="#ff0000" stroke-width="2" />
<rect x="0.0" y="193.0" width="1018.8" height="842.0" fill="#d4d0c8" />
<rect x="1.4" y="195.0" width="1014.0" height="2.2" fill="#fff" />
<rect x="1.4" y="195.0" width="2.2" height="840.0" fill="#fff" />
<rect x="1016.0" y="193.0" width="2.8" height="842.0" fill="#404040" />
<rect x="1014.5" y="195.0" width="1.5" height="840.0" fill="#808080" />
<rect x="5.0" y="198.6" width="1008.7" height="32.0" fill="url(#gc)" />
<text x="8.3" y="221.5" font-family="Liberation Sans" font-size="21.08" font-weight="bold" fill="#fff" text-anchor="start" textLength="191.0" lengthAdjust="spacingAndGlyphs">Placement Monitor</text>
<rect x="920.0" y="202.0" width="28.0" height="25.0" fill="#d4d0c8" />
<rect x="920.0" y="202.0" width="28.0" height="1.5" fill="#fff" />
<rect x="920.0" y="202.0" width="1.5" height="25.0" fill="#fff" />
<rect x="920.0" y="225.5" width="28.0" height="1.5" fill="#404040" />
<rect x="946.5" y="202.0" width="1.5" height="25.0" fill="#404040" />
<rect x="921.5" y="224.0" width="25.0" height="1.5" fill="#808080" />
<rect x="945.0" y="203.5" width="1.5" height="22.0" fill="#808080" />
<rect x="949.0" y="202.0" width="28.0" height="25.0" fill="#d4d0c8" />
<rect x="949.0" y="202.0" width="28.0" height="1.5" fill="#fff" />
<rect x="949.0" y="202.0" width="1.5" height="25.0" fill="#fff" />
<rect x="949.0" y="225.5" width="28.0" height="1.5" fill="#404040" />
<rect x="975.5" y="202.0" width="1.5" height="25.0" fill="#404040" />
<rect x="950.5" y="224.0" width="25.0" height="1.5" fill="#808080" />
<rect x="974.0" y="203.5" width="1.5" height="22.0" fill="#808080" />
<rect x="981.0" y="202.0" width="29.0" height="25.0" fill="#d4d0c8" />
<rect x="981.0" y="202.0" width="29.0" height="1.5" fill="#fff" />
<rect x="981.0" y="202.0" width="1.5" height="25.0" fill="#fff" />
<rect x="981.0" y="225.5" width="29.0" height="1.5" fill="#404040" />
<rect x="1008.5" y="202.0" width="1.5" height="25.0" fill="#404040" />
<rect x="982.5" y="224.0" width="26.0" height="1.5" fill="#808080" />
<rect x="1007.0" y="203.5" width="1.5" height="22.0" fill="#808080" />
<rect x="928.0" y="217.0" width="11.0" height="4.0" fill="#000" />
<rect x="956" y="208" width="14" height="14" fill="none" stroke="#808080" stroke-width="2"/><rect x="957" y="209" width="12" height="2.5" fill="#808080"/><rect x="958" y="222" width="13" height="1.5" fill="#fff"/><rect x="971" y="210" width="1.5" height="13" fill="#fff"/>
<path d="M989,210 L1002,222 M1002,210 L989,222" stroke="#000" stroke-width="2.4"/>
<rect x="5.0" y="231.5" width="1009.5" height="803.5" fill="#c0c0c0" />
<rect x="24.0" y="253.0" width="735.0" height="1.5" fill="#808080" />
<rect x="24.0" y="253.0" width="1.5" height="576.5" fill="#808080" />
<rect x="25.5" y="254.5" width="733.5" height="1.5" fill="#fff" />
<rect x="25.5" y="254.5" width="1.5" height="575.0" fill="#fff" />
<rect x="24.0" y="828.0" width="735.0" height="1.5" fill="#808080" />
<rect x="757.5" y="253.0" width="1.5" height="576.5" fill="#808080" />
<rect x="24.0" y="829.5" width="736.5" height="1.5" fill="#fff" />
<rect x="759.0" y="253.0" width="1.5" height="578.0" fill="#fff" />
<rect x="32.0" y="245.0" width="163.0" height="20.0" fill="#c0c0c0" />
<text x="44.4" y="269.0" font-family="Liberation Sans" font-size="24.71" font-weight="bold" fill="#000080" text-anchor="start" textLength="148.0" lengthAdjust="spacingAndGlyphs">Step Display</text>
<text x="73.6" y="306.5" font-family="Liberation Sans" font-size="25.44" font-weight="normal" fill="#000" text-anchor="start" textLength="65.4" lengthAdjust="spacingAndGlyphs">Total :</text>
<text x="161.0" y="306.5" font-family="Liberation Sans" font-size="25.44" font-weight="normal" fill="#000" text-anchor="start" textLength="23.7" lengthAdjust="spacingAndGlyphs">78</text>
<text x="229.0" y="306.5" font-family="Liberation Sans" font-size="25.44" font-weight="normal" fill="#000" text-anchor="start" textLength="85.0" lengthAdjust="spacingAndGlyphs">Point (s)</text>
<text x="507.0" y="306.5" font-family="Liberation Sans" font-size="25.15" font-weight="normal" fill="#000" text-anchor="start" textLength="63.0" lengthAdjust="spacingAndGlyphs">( Unit :</text>
<text x="589.0" y="306.5" font-family="Liberation Sans" font-size="25.15" font-weight="normal" fill="#000" text-anchor="start" textLength="38.0" lengthAdjust="spacingAndGlyphs">mm</text>
<text x="650.0" y="306.5" font-family="Liberation Sans" font-size="25.15" font-weight="normal" fill="#000" text-anchor="start" textLength="5.5" lengthAdjust="spacingAndGlyphs">)</text>
<rect x="38.0" y="316.0" width="708.0" height="500.0" fill="#c0c0c0" />
<clipPath id="tclip"><rect x="38" y="316" width="679" height="469.5"/></clipPath>
<g clip-path="url(#tclip)">
<rect x="113.0" y="350.3" width="604.0" height="34.3" fill="#0a246a" />
<text x="85.2" y="376.3" font-family="Liberation Sans" font-size="25.15" font-weight="normal" fill="#000" text-anchor="middle" transform="scale(0.88,1)" stroke="#000" stroke-width="0.8">1</text>
<text x="177.8" y="376.3" font-family="Liberation Sans" font-size="25.15" font-weight="normal" fill="#fff" text-anchor="middle" transform="scale(0.88,1)" stroke="#fff" stroke-width="0.8">1</text>
<text x="256.2" y="376.3" font-family="Liberation Sans" font-size="25.15" font-weight="normal" fill="#fff" text-anchor="middle" transform="scale(0.88,1)" stroke="#fff" stroke-width="0.8">1</text>
<text x="294.0" y="376.3" font-family="Liberation Sans" font-size="25.87" font-weight="normal" fill="#fff" text-anchor="middle" textLength="57.5" lengthAdjust="spacingAndGlyphs" stroke="#fff" stroke-width="0.9">MNT</text>
<text x="417.0" y="376.3" font-family="Liberation Sans" font-size="25.87" font-weight="normal" fill="#fff" text-anchor="middle" stroke="#fff" stroke-width="0.9">C102_2</text>
<text transform="scale(0.88,1)" x="610.7 627.3 643.9 656.4 668.9 685.5 702.0" y="376.3" font-family="Liberation Sans" font-size="25.2" fill="#fff" stroke="#fff" stroke-width="0.8" text-anchor="middle">113.049</text>
<text transform="scale(0.88,1)" x="779.7 796.2 808.8" y="376.3" font-family="Liberation Sans" font-size="25.2" fill="#fff" stroke="#fff" stroke-width="0.8" text-anchor="middle">37.</text>
<rect x="113.0" y="383.4" width="604.0" height="1.6" fill="#c0c0c0" />
<rect x="38.0" y="383.4" width="75.0" height="2.0" fill="#000" />
<rect x="113.0" y="384.6" width="604.0" height="34.3" fill="#0a246a" />
<text x="85.2" y="410.6" font-family="Liberation Sans" font-size="25.15" font-weight="normal" fill="#000" text-anchor="middle" transform="scale(0.88,1)" stroke="#000" stroke-width="0.8">2</text>
<text x="177.8" y="410.6" font-family="Liberation Sans" font-size="25.15" font-weight="normal" fill="#fff" text-anchor="middle" transform="scale(0.88,1)" stroke="#fff" stroke-width="0.8">1</text>
<text x="256.2" y="410.6" font-family="Liberation Sans" font-size="25.15" font-weight="normal" fill="#fff" text-anchor="middle" transform="scale(0.88,1)" stroke="#fff" stroke-width="0.8">2</text>
<text x="294.0" y="410.6" font-family="Liberation Sans" font-size="25.87" font-weight="normal" fill="#fff" text-anchor="middle" textLength="57.5" lengthAdjust="spacingAndGlyphs" stroke="#fff" stroke-width="0.9">MNT</text>
<text x="417.0" y="410.6" font-family="Liberation Sans" font-size="25.87" font-weight="normal" fill="#fff" text-anchor="middle" stroke="#fff" stroke-width="0.9">AACOUR5_</text>
<text transform="scale(0.88,1)" x="627.3 643.9 656.4 668.9 685.5 702.0" y="410.6" font-family="Liberation Sans" font-size="25.2" fill="#fff" stroke="#fff" stroke-width="0.8" text-anchor="middle">96.799</text>
<text transform="scale(0.88,1)" x="763.1 779.7 796.2 808.8" y="410.6" font-family="Liberation Sans" font-size="25.2" fill="#fff" stroke="#fff" stroke-width="0.8" text-anchor="middle">107.</text>
<rect x="113.0" y="417.8" width="604.0" height="1.6" fill="#c0c0c0" />
<rect x="38.0" y="417.8" width="75.0" height="2.0" fill="#000" />
<rect x="113.0" y="419.0" width="604.0" height="34.3" fill="#0a246a" />
<text x="85.2" y="445.0" font-family="Liberation Sans" font-size="25.15" font-weight="normal" fill="#000" text-anchor="middle" transform="scale(0.88,1)" stroke="#000" stroke-width="0.8">3</text>
<text x="177.8" y="445.0" font-family="Liberation Sans" font-size="25.15" font-weight="normal" fill="#fff" text-anchor="middle" transform="scale(0.88,1)" stroke="#fff" stroke-width="0.8">1</text>
<text x="256.2" y="445.0" font-family="Liberation Sans" font-size="25.15" font-weight="normal" fill="#fff" text-anchor="middle" transform="scale(0.88,1)" stroke="#fff" stroke-width="0.8">3</text>
<text x="294.0" y="445.0" font-family="Liberation Sans" font-size="25.87" font-weight="normal" fill="#fff" text-anchor="middle" textLength="57.5" lengthAdjust="spacingAndGlyphs" stroke="#fff" stroke-width="0.9">MNT</text>
<text x="417.0" y="445.0" font-family="Liberation Sans" font-size="25.87" font-weight="normal" fill="#fff" text-anchor="middle" stroke="#fff" stroke-width="0.9">C101_2</text>
<text transform="scale(0.88,1)" x="610.7 627.3 643.9 656.4 668.9 685.5 702.0" y="445.0" font-family="Liberation Sans" font-size="25.2" fill="#fff" stroke="#fff" stroke-width="0.8" text-anchor="middle">109.450</text>
<text transform="scale(0.88,1)" x="779.7 796.2 808.8" y="445.0" font-family="Liberation Sans" font-size="25.2" fill="#fff" stroke="#fff" stroke-width="0.8" text-anchor="middle">40.</text>
<rect x="113.0" y="452.1" width="604.0" height="1.6" fill="#c0c0c0" />
<rect x="38.0" y="452.1" width="75.0" height="2.0" fill="#000" />
<rect x="113.0" y="453.3" width="604.0" height="34.3" fill="#00ffff" />
<text x="85.2" y="479.3" font-family="Liberation Sans" font-size="25.15" font-weight="normal" fill="#000" text-anchor="middle" transform="scale(0.88,1)" stroke="#000" stroke-width="0.8">4</text>
<text x="177.8" y="479.3" font-family="Liberation Sans" font-size="25.15" font-weight="normal" fill="#000" text-anchor="middle" transform="scale(0.88,1)" stroke="#000" stroke-width="0.8">2</text>
<text x="256.2" y="479.3" font-family="Liberation Sans" font-size="25.15" font-weight="normal" fill="#000" text-anchor="middle" transform="scale(0.88,1)" stroke="#000" stroke-width="0.8">1</text>
<text x="294.0" y="479.3" font-family="Liberation Sans" font-size="25.87" font-weight="normal" fill="#000" text-anchor="middle" textLength="57.5" lengthAdjust="spacingAndGlyphs" stroke="#000" stroke-width="0.9">MNT</text>
<text x="417.0" y="479.3" font-family="Liberation Sans" font-size="25.87" font-weight="normal" fill="#000" text-anchor="middle" stroke="#000" stroke-width="0.9">C132_2</text>
<text transform="scale(0.88,1)" x="610.7 627.3 643.9 656.4 668.9 685.5 702.0" y="479.3" font-family="Liberation Sans" font-size="25.2" fill="#000" stroke="#000" stroke-width="0.8" text-anchor="middle">114.049</text>
<text transform="scale(0.88,1)" x="779.7 796.2 808.8" y="479.3" font-family="Liberation Sans" font-size="25.2" fill="#000" stroke="#000" stroke-width="0.8" text-anchor="middle">25.</text>
<rect x="113.0" y="486.4" width="604.0" height="1.6" fill="#c0c0c0" />
<rect x="38.0" y="486.4" width="75.0" height="2.0" fill="#000" />
<rect x="113.0" y="487.6" width="604.0" height="34.3" fill="#00ffff" />
<text x="85.2" y="513.6" font-family="Liberation Sans" font-size="25.15" font-weight="normal" fill="#000" text-anchor="middle" transform="scale(0.88,1)" stroke="#000" stroke-width="0.8">5</text>
<text x="177.8" y="513.6" font-family="Liberation Sans" font-size="25.15" font-weight="normal" fill="#000" text-anchor="middle" transform="scale(0.88,1)" stroke="#000" stroke-width="0.8">2</text>
<text x="256.2" y="513.6" font-family="Liberation Sans" font-size="25.15" font-weight="normal" fill="#000" text-anchor="middle" transform="scale(0.88,1)" stroke="#000" stroke-width="0.8">2</text>
<text x="294.0" y="513.6" font-family="Liberation Sans" font-size="25.87" font-weight="normal" fill="#000" text-anchor="middle" textLength="57.5" lengthAdjust="spacingAndGlyphs" stroke="#000" stroke-width="0.9">MNT</text>
<text x="417.0" y="513.6" font-family="Liberation Sans" font-size="25.87" font-weight="normal" fill="#000" text-anchor="middle" stroke="#000" stroke-width="0.9">C118_2</text>
<text transform="scale(0.88,1)" x="610.7 627.3 643.9 656.4 668.9 685.5 702.0" y="513.6" font-family="Liberation Sans" font-size="25.2" fill="#000" stroke="#000" stroke-width="0.8" text-anchor="middle">108.000</text>
<text transform="scale(0.88,1)" x="779.7 796.2 808.8" y="513.6" font-family="Liberation Sans" font-size="25.2" fill="#000" stroke="#000" stroke-width="0.8" text-anchor="middle">37.</text>
<rect x="113.0" y="520.8" width="604.0" height="1.6" fill="#c0c0c0" />
<rect x="38.0" y="520.8" width="75.0" height="2.0" fill="#000" />
<rect x="113.0" y="522.0" width="604.0" height="34.3" fill="#00ffff" />
<text x="85.2" y="548.0" font-family="Liberation Sans" font-size="25.15" font-weight="normal" fill="#000" text-anchor="middle" transform="scale(0.88,1)" stroke="#000" stroke-width="0.8">6</text>
<text x="177.8" y="548.0" font-family="Liberation Sans" font-size="25.15" font-weight="normal" fill="#000" text-anchor="middle" transform="scale(0.88,1)" stroke="#000" stroke-width="0.8">2</text>
<text x="256.2" y="548.0" font-family="Liberation Sans" font-size="25.15" font-weight="normal" fill="#000" text-anchor="middle" transform="scale(0.88,1)" stroke="#000" stroke-width="0.8">3</text>
<text x="294.0" y="548.0" font-family="Liberation Sans" font-size="25.87" font-weight="normal" fill="#000" text-anchor="middle" textLength="57.5" lengthAdjust="spacingAndGlyphs" stroke="#000" stroke-width="0.9">MNT</text>
<text x="417.0" y="548.0" font-family="Liberation Sans" font-size="25.87" font-weight="normal" fill="#000" text-anchor="middle" stroke="#000" stroke-width="0.9">C131_2</text>
<text transform="scale(0.88,1)" x="610.7 627.3 643.9 656.4 668.9 685.5 702.0" y="548.0" font-family="Liberation Sans" font-size="25.2" fill="#000" stroke="#000" stroke-width="0.8" text-anchor="middle">111.349</text>
<text transform="scale(0.88,1)" x="779.7 796.2 808.8" y="548.0" font-family="Liberation Sans" font-size="25.2" fill="#000" stroke="#000" stroke-width="0.8" text-anchor="middle">37.</text>
<rect x="113.0" y="555.1" width="604.0" height="1.6" fill="#c0c0c0" />
<rect x="38.0" y="555.1" width="75.0" height="2.0" fill="#000" />
<rect x="113.0" y="556.3" width="604.0" height="34.3" fill="#00ffff" />
<text x="85.2" y="582.3" font-family="Liberation Sans" font-size="25.15" font-weight="normal" fill="#000" text-anchor="middle" transform="scale(0.88,1)" stroke="#000" stroke-width="0.8">7</text>
<text x="177.8" y="582.3" font-family="Liberation Sans" font-size="25.15" font-weight="normal" fill="#000" text-anchor="middle" transform="scale(0.88,1)" stroke="#000" stroke-width="0.8">3</text>
<text x="256.2" y="582.3" font-family="Liberation Sans" font-size="25.15" font-weight="normal" fill="#000" text-anchor="middle" transform="scale(0.88,1)" stroke="#000" stroke-width="0.8">1</text>
<text x="294.0" y="582.3" font-family="Liberation Sans" font-size="25.87" font-weight="normal" fill="#000" text-anchor="middle" textLength="57.5" lengthAdjust="spacingAndGlyphs" stroke="#000" stroke-width="0.9">MNT</text>
<text x="417.0" y="582.3" font-family="Liberation Sans" font-size="25.87" font-weight="normal" fill="#000" text-anchor="middle" stroke="#000" stroke-width="0.9">C133_2</text>
<text transform="scale(0.88,1)" x="610.7 627.3 643.9 656.4 668.9 685.5 702.0" y="582.3" font-family="Liberation Sans" font-size="25.2" fill="#000" stroke="#000" stroke-width="0.8" text-anchor="middle">118.724</text>
<text transform="scale(0.88,1)" x="779.7 796.2 808.8" y="582.3" font-family="Liberation Sans" font-size="25.2" fill="#000" stroke="#000" stroke-width="0.8" text-anchor="middle">31.</text>
<rect x="113.0" y="589.4" width="604.0" height="1.6" fill="#c0c0c0" />
<rect x="38.0" y="589.4" width="75.0" height="2.0" fill="#000" />
<rect x="113.0" y="590.6" width="604.0" height="34.3" fill="#00ffff" />
<text x="85.2" y="616.6" font-family="Liberation Sans" font-size="25.15" font-weight="normal" fill="#000" text-anchor="middle" transform="scale(0.88,1)" stroke="#000" stroke-width="0.8">8</text>
<text x="177.8" y="616.6" font-family="Liberation Sans" font-size="25.15" font-weight="normal" fill="#000" text-anchor="middle" transform="scale(0.88,1)" stroke="#000" stroke-width="0.8">3</text>
<text x="256.2" y="616.6" font-family="Liberation Sans" font-size="25.15" font-weight="normal" fill="#000" text-anchor="middle" transform="scale(0.88,1)" stroke="#000" stroke-width="0.8">2</text>
<text x="294.0" y="616.6" font-family="Liberation Sans" font-size="25.87" font-weight="normal" fill="#000" text-anchor="middle" textLength="57.5" lengthAdjust="spacingAndGlyphs" stroke="#000" stroke-width="0.9">MNT</text>
<text x="417.0" y="616.6" font-family="Liberation Sans" font-size="25.87" font-weight="normal" fill="#000" text-anchor="middle" stroke="#000" stroke-width="0.9">C123_2</text>
<text transform="scale(0.88,1)" x="610.7 627.3 643.9 656.4 668.9 685.5 702.0" y="616.6" font-family="Liberation Sans" font-size="25.2" fill="#000" stroke="#000" stroke-width="0.8" text-anchor="middle">107.299</text>
<text transform="scale(0.88,1)" x="779.7 796.2 808.8" y="616.6" font-family="Liberation Sans" font-size="25.2" fill="#000" stroke="#000" stroke-width="0.8" text-anchor="middle">40.</text>
<rect x="113.0" y="623.7" width="604.0" height="1.6" fill="#c0c0c0" />
<rect x="38.0" y="623.7" width="75.0" height="2.0" fill="#000" />
<rect x="113.0" y="624.9" width="604.0" height="34.3" fill="#00ffff" />
<text x="85.2" y="650.9" font-family="Liberation Sans" font-size="25.15" font-weight="normal" fill="#000" text-anchor="middle" transform="scale(0.88,1)" stroke="#000" stroke-width="0.8">9</text>
<text x="177.8" y="650.9" font-family="Liberation Sans" font-size="25.15" font-weight="normal" fill="#000" text-anchor="middle" transform="scale(0.88,1)" stroke="#000" stroke-width="0.8">3</text>
<text x="256.2" y="650.9" font-family="Liberation Sans" font-size="25.15" font-weight="normal" fill="#000" text-anchor="middle" transform="scale(0.88,1)" stroke="#000" stroke-width="0.8">3</text>
<text x="294.0" y="650.9" font-family="Liberation Sans" font-size="25.87" font-weight="normal" fill="#000" text-anchor="middle" textLength="57.5" lengthAdjust="spacingAndGlyphs" stroke="#000" stroke-width="0.9">MNT</text>
<text x="417.0" y="650.9" font-family="Liberation Sans" font-size="25.87" font-weight="normal" fill="#000" text-anchor="middle" stroke="#000" stroke-width="0.9">C119_1</text>
<text transform="scale(0.88,1)" x="627.3 643.9 656.4 668.9 685.5 702.0" y="650.9" font-family="Liberation Sans" font-size="25.2" fill="#000" stroke="#000" stroke-width="0.8" text-anchor="middle">21.350</text>
<text transform="scale(0.88,1)" x="779.7 796.2 808.8" y="650.9" font-family="Liberation Sans" font-size="25.2" fill="#000" stroke="#000" stroke-width="0.8" text-anchor="middle">28.</text>
<rect x="113.0" y="658.1" width="604.0" height="1.6" fill="#c0c0c0" />
<rect x="38.0" y="658.1" width="75.0" height="2.0" fill="#000" />
<rect x="113.0" y="659.3" width="604.0" height="34.3" fill="#00ffff" />
<text x="85.2" y="685.3" font-family="Liberation Sans" font-size="25.15" font-weight="normal" fill="#000" text-anchor="middle" transform="scale(0.88,1)" stroke="#000" stroke-width="0.8">10</text>
<text x="177.8" y="685.3" font-family="Liberation Sans" font-size="25.15" font-weight="normal" fill="#000" text-anchor="middle" transform="scale(0.88,1)" stroke="#000" stroke-width="0.8">4</text>
<text x="256.2" y="685.3" font-family="Liberation Sans" font-size="25.15" font-weight="normal" fill="#000" text-anchor="middle" transform="scale(0.88,1)" stroke="#000" stroke-width="0.8">1</text>
<text x="294.0" y="685.3" font-family="Liberation Sans" font-size="25.87" font-weight="normal" fill="#000" text-anchor="middle" textLength="57.5" lengthAdjust="spacingAndGlyphs" stroke="#000" stroke-width="0.9">MNT</text>
<text x="417.0" y="685.3" font-family="Liberation Sans" font-size="25.87" font-weight="normal" fill="#000" text-anchor="middle" stroke="#000" stroke-width="0.9">C117_2</text>
<text transform="scale(0.88,1)" x="610.7 627.3 643.9 656.4 668.9 685.5 702.0" y="685.3" font-family="Liberation Sans" font-size="25.2" fill="#000" stroke="#000" stroke-width="0.8" text-anchor="middle">115.699</text>
<text transform="scale(0.88,1)" x="779.7 796.2 808.8" y="685.3" font-family="Liberation Sans" font-size="25.2" fill="#000" stroke="#000" stroke-width="0.8" text-anchor="middle">13.</text>
<rect x="113.0" y="692.4" width="604.0" height="1.6" fill="#c0c0c0" />
<rect x="38.0" y="692.4" width="75.0" height="2.0" fill="#000" />
<rect x="113.0" y="693.6" width="604.0" height="34.3" fill="#00ffff" />
<text x="85.2" y="719.6" font-family="Liberation Sans" font-size="25.15" font-weight="normal" fill="#000" text-anchor="middle" transform="scale(0.88,1)" stroke="#000" stroke-width="0.8">11</text>
<text x="177.8" y="719.6" font-family="Liberation Sans" font-size="25.15" font-weight="normal" fill="#000" text-anchor="middle" transform="scale(0.88,1)" stroke="#000" stroke-width="0.8">4</text>
<text x="256.2" y="719.6" font-family="Liberation Sans" font-size="25.15" font-weight="normal" fill="#000" text-anchor="middle" transform="scale(0.88,1)" stroke="#000" stroke-width="0.8">2</text>
<text x="294.0" y="719.6" font-family="Liberation Sans" font-size="25.87" font-weight="normal" fill="#000" text-anchor="middle" textLength="57.5" lengthAdjust="spacingAndGlyphs" stroke="#000" stroke-width="0.9">MNT</text>
<text x="417.0" y="719.6" font-family="Liberation Sans" font-size="25.87" font-weight="normal" fill="#000" text-anchor="middle" stroke="#000" stroke-width="0.9">C127_2</text>
<text transform="scale(0.88,1)" x="610.7 627.3 643.9 656.4 668.9 685.5 702.0" y="719.6" font-family="Liberation Sans" font-size="25.2" fill="#000" stroke="#000" stroke-width="0.8" text-anchor="middle">127.299</text>
<text transform="scale(0.88,1)" x="779.7 796.2 808.8" y="719.6" font-family="Liberation Sans" font-size="25.2" fill="#000" stroke="#000" stroke-width="0.8" text-anchor="middle">17.</text>
<rect x="113.0" y="726.7" width="604.0" height="1.6" fill="#c0c0c0" />
<rect x="38.0" y="726.7" width="75.0" height="2.0" fill="#000" />
<rect x="113.0" y="727.9" width="604.0" height="34.3" fill="#00ffff" />
<text x="85.2" y="753.9" font-family="Liberation Sans" font-size="25.15" font-weight="normal" fill="#000" text-anchor="middle" transform="scale(0.88,1)" stroke="#000" stroke-width="0.8">12</text>
<text x="177.8" y="753.9" font-family="Liberation Sans" font-size="25.15" font-weight="normal" fill="#000" text-anchor="middle" transform="scale(0.88,1)" stroke="#000" stroke-width="0.8">4</text>
<text x="256.2" y="753.9" font-family="Liberation Sans" font-size="25.15" font-weight="normal" fill="#000" text-anchor="middle" transform="scale(0.88,1)" stroke="#000" stroke-width="0.8">3</text>
<text x="294.0" y="753.9" font-family="Liberation Sans" font-size="25.87" font-weight="normal" fill="#000" text-anchor="middle" textLength="57.5" lengthAdjust="spacingAndGlyphs" stroke="#000" stroke-width="0.9">MNT</text>
<text x="417.0" y="753.9" font-family="Liberation Sans" font-size="25.87" font-weight="normal" fill="#000" text-anchor="middle" stroke="#000" stroke-width="0.9">C129_2</text>
<text transform="scale(0.88,1)" x="610.7 627.3 643.9 656.4 668.9 685.5 702.0" y="753.9" font-family="Liberation Sans" font-size="25.2" fill="#000" stroke="#000" stroke-width="0.8" text-anchor="middle">111.450</text>
<text transform="scale(0.88,1)" x="779.7 796.2 808.8" y="753.9" font-family="Liberation Sans" font-size="25.2" fill="#000" stroke="#000" stroke-width="0.8" text-anchor="middle">12.</text>
<rect x="113.0" y="761.1" width="604.0" height="1.6" fill="#c0c0c0" />
<rect x="38.0" y="761.1" width="75.0" height="2.0" fill="#000" />
<rect x="113.0" y="762.3" width="604.0" height="34.3" fill="#00ffff" />
<text x="85.2" y="788.3" font-family="Liberation Sans" font-size="25.15" font-weight="normal" fill="#000" text-anchor="middle" transform="scale(0.88,1)" stroke="#000" stroke-width="0.8">13</text>
<text x="177.8" y="788.3" font-family="Liberation Sans" font-size="25.15" font-weight="normal" fill="#000" text-anchor="middle" transform="scale(0.88,1)" stroke="#000" stroke-width="0.8">5</text>
<text x="256.2" y="788.3" font-family="Liberation Sans" font-size="25.15" font-weight="normal" fill="#000" text-anchor="middle" transform="scale(0.88,1)" stroke="#000" stroke-width="0.8">1</text>
<text x="294.0" y="788.3" font-family="Liberation Sans" font-size="25.87" font-weight="normal" fill="#000" text-anchor="middle" textLength="57.5" lengthAdjust="spacingAndGlyphs" stroke="#000" stroke-width="0.9">MNT</text>
<text x="417.0" y="788.3" font-family="Liberation Sans" font-size="25.87" font-weight="normal" fill="#000" text-anchor="middle" stroke="#000" stroke-width="0.9">C114_2</text>
<text transform="scale(0.88,1)" x="610.7 627.3 643.9 656.4 668.9 685.5 702.0" y="788.3" font-family="Liberation Sans" font-size="25.2" fill="#000" stroke="#000" stroke-width="0.8" text-anchor="middle">112.849</text>
<text transform="scale(0.88,1)" x="779.7 796.2 808.8" y="788.3" font-family="Liberation Sans" font-size="25.2" fill="#000" stroke="#000" stroke-width="0.8" text-anchor="middle">20.</text>
<rect x="113.0" y="795.4" width="604.0" height="1.6" fill="#c0c0c0" />
<rect x="38.0" y="795.4" width="75.0" height="2.0" fill="#000" />
<rect x="199.2" y="350.3" width="1.6" height="470.0" fill="#c0c0c0" />
<rect x="250.2" y="350.3" width="1.6" height="470.0" fill="#c0c0c0" />
<rect x="337.2" y="350.3" width="1.6" height="470.0" fill="#c0c0c0" />
<rect x="495.2" y="350.3" width="1.6" height="470.0" fill="#c0c0c0" />
<rect x="628.2" y="350.3" width="1.6" height="470.0" fill="#c0c0c0" />
</g>
<rect x="38.0" y="316.0" width="679.0" height="34.3" fill="#c0c0c0" />
<rect x="38.0" y="348.5" width="679.0" height="2.0" fill="#000" />
<text x="75.0" y="342.0" font-family="Liberation Sans" font-size="25.87" font-weight="normal" fill="#000" text-anchor="middle" stroke="#000" stroke-width="0.9">No.</text>
<text x="156.5" y="342.0" font-family="Liberation Sans" font-size="25.87" font-weight="normal" fill="#000" text-anchor="middle" stroke="#000" stroke-width="0.9">Cycle</text>
<text x="225.5" y="342.0" font-family="Liberation Sans" font-size="25.87" font-weight="normal" fill="#000" text-anchor="middle" stroke="#000" stroke-width="0.9">HD</text>
<text x="294.0" y="342.0" font-family="Liberation Sans" font-size="25.87" font-weight="normal" fill="#000" text-anchor="middle" stroke="#000" stroke-width="0.9">Flag</text>
<text x="417.0" y="342.0" font-family="Liberation Sans" font-size="25.87" font-weight="normal" fill="#000" text-anchor="middle" stroke="#000" stroke-width="0.9">Ref.</text>
<text x="562.5" y="342.0" font-family="Liberation Sans" font-size="25.87" font-weight="normal" fill="#000" text-anchor="middle" stroke="#000" stroke-width="0.9">Pos.X</text>
<clipPath id="hclip"><rect x="629" y="316" width="88" height="34"/></clipPath><g clip-path="url(#hclip)">
<text x="660.0" y="342.0" font-family="Liberation Sans" font-size="25.87" font-weight="normal" fill="#000" text-anchor="start" textLength="70.7" lengthAdjust="spacingAndGlyphs" stroke="#000" stroke-width="0.9">Pos.Y</text>
</g>
<rect x="112.0" y="316.0" width="2.0" height="34.3" fill="#000" />
<rect x="199.0" y="316.0" width="2.0" height="34.3" fill="#000" />
<rect x="250.0" y="316.0" width="2.0" height="34.3" fill="#000" />
<rect x="337.0" y="316.0" width="2.0" height="34.3" fill="#000" />
<rect x="495.0" y="316.0" width="2.0" height="34.3" fill="#000" />
<rect x="628.0" y="316.0" width="2.0" height="34.3" fill="#000" />
<rect x="111.7" y="316.0" width="2.6" height="470.0" fill="#000" />
<rect x="38.0" y="316.0" width="2.0" height="500.0" fill="#000" />
<rect x="717.0" y="316.0" width="29.0" height="34.3" fill="#c0c0c0" />
<rect x="38.0" y="316.0" width="708.0" height="2.0" fill="#000" />
<rect x="38.0" y="814.5" width="708.0" height="2.0" fill="#000" />
<rect x="744.5" y="316.0" width="2.0" height="500.0" fill="#000" />
<rect x="717.0" y="318.0" width="28.0" height="467.5" fill="url(#dith)" />
<rect x="717.0" y="318.0" width="28.0" height="27.0" fill="#d4d0c8" />
<rect x="717.0" y="318.0" width="28.0" height="1.5" fill="#fff" />
<rect x="717.0" y="318.0" width="1.5" height="27.0" fill="#fff" />
<rect x="717.0" y="343.5" width="28.0" height="1.5" fill="#404040" />
<rect x="743.5" y="318.0" width="1.5" height="27.0" fill="#404040" />
<rect x="718.5" y="342.0" width="25.0" height="1.5" fill="#808080" />
<rect x="742.0" y="319.5" width="1.5" height="24.0" fill="#808080" />
<path d="M724,337 L738,337 L731,329 Z" fill="#000"/>
<rect x="717.0" y="346.5" width="28.0" height="26.5" fill="#d4d0c8" />
<rect x="717.0" y="346.5" width="28.0" height="1.5" fill="#fff" />
<rect x="717.0" y="346.5" width="1.5" height="26.5" fill="#fff" />
<rect x="717.0" y="371.5" width="28.0" height="1.5" fill="#404040" />
<rect x="743.5" y="346.5" width="1.5" height="26.5" fill="#404040" />
<rect x="718.5" y="370.0" width="25.0" height="1.5" fill="#808080" />
<rect x="742.0" y="348.0" width="1.5" height="23.5" fill="#808080" />
<rect x="717.0" y="758.5" width="28.0" height="27.0" fill="#d4d0c8" />
<rect x="717.0" y="758.5" width="28.0" height="1.5" fill="#fff" />
<rect x="717.0" y="758.5" width="1.5" height="27.0" fill="#fff" />
<rect x="717.0" y="784.0" width="28.0" height="1.5" fill="#404040" />
<rect x="743.5" y="758.5" width="1.5" height="27.0" fill="#404040" />
<rect x="718.5" y="782.5" width="25.0" height="1.5" fill="#808080" />
<rect x="742.0" y="760.0" width="1.5" height="24.0" fill="#808080" />
<path d="M724,767 L738,767 L731,775 Z" fill="#000"/>
<rect x="39.0" y="785.5" width="678.0" height="29.5" fill="url(#dith)" />
<rect x="39.0" y="785.5" width="27.5" height="29.5" fill="#d4d0c8" />
<rect x="39.0" y="785.5" width="27.5" height="1.5" fill="#fff" />
<rect x="39.0" y="785.5" width="1.5" height="29.5" fill="#fff" />
<rect x="39.0" y="813.5" width="27.5" height="1.5" fill="#404040" />
<rect x="65.0" y="785.5" width="1.5" height="29.5" fill="#404040" />
<rect x="40.5" y="812.0" width="24.5" height="1.5" fill="#808080" />
<rect x="63.5" y="787.0" width="1.5" height="26.5" fill="#808080" />
<path d="M50,800 L57,793 L57,807 Z" fill="#000"/>
<rect x="67.0" y="785.5" width="29.0" height="29.5" fill="#d4d0c8" />
<rect x="67.0" y="785.5" width="29.0" height="1.5" fill="#fff" />
<rect x="67.0" y="785.5" width="1.5" height="29.5" fill="#fff" />
<rect x="67.0" y="813.5" width="29.0" height="1.5" fill="#404040" />
<rect x="94.5" y="785.5" width="1.5" height="29.5" fill="#404040" />
<rect x="68.5" y="812.0" width="26.0" height="1.5" fill="#808080" />
<rect x="93.0" y="787.0" width="1.5" height="26.5" fill="#808080" />
<rect x="689.0" y="785.5" width="28.0" height="29.5" fill="#d4d0c8" />
<rect x="689.0" y="785.5" width="28.0" height="1.5" fill="#fff" />
<rect x="689.0" y="785.5" width="1.5" height="29.5" fill="#fff" />
<rect x="689.0" y="813.5" width="28.0" height="1.5" fill="#404040" />
<rect x="715.5" y="785.5" width="1.5" height="29.5" fill="#404040" />
<rect x="690.5" y="812.0" width="25.0" height="1.5" fill="#808080" />
<rect x="714.0" y="787.0" width="1.5" height="26.5" fill="#808080" />
<path d="M706,800 L699,793 L699,807 Z" fill="#000"/>
<rect x="717.0" y="785.5" width="28.0" height="29.5" fill="#d4d0c8" />
<rect x="783.5" y="258.5" width="214.0" height="1.5" fill="#808080" />
<rect x="783.5" y="258.5" width="1.5" height="271.5" fill="#808080" />
<rect x="785.0" y="260.0" width="212.5" height="1.5" fill="#fff" />
<rect x="785.0" y="260.0" width="1.5" height="270.0" fill="#fff" />
<rect x="783.5" y="528.5" width="214.0" height="1.5" fill="#808080" />
<rect x="996.0" y="258.5" width="1.5" height="271.5" fill="#808080" />
<rect x="783.5" y="530.0" width="215.5" height="1.5" fill="#fff" />
<rect x="997.5" y="258.5" width="1.5" height="273.0" fill="#fff" />
<rect x="795.0" y="245.0" width="101.0" height="22.0" fill="#c0c0c0" />
<text x="805.8" y="266.0" font-family="Liberation Sans" font-size="23.98" font-weight="normal" fill="#000" text-anchor="start" textLength="81.0" lengthAdjust="spacingAndGlyphs">Options</text>
<text x="801.7" y="302.5" font-family="Liberation Sans" font-size="23.98" font-weight="normal" fill="#000" text-anchor="start" textLength="65.0" lengthAdjust="spacingAndGlyphs">Do All</text>
<circle cx="802.8" cy="324.6" r="10" fill="#fff"/>
<circle cx="802.8" cy="324.6" r="8.5" fill="#fff" stroke="#d4d0c8" stroke-width="2"/>
<path d="M796.1,331.3 A9.5,9.5 0 0 1 809.5,317.9" fill="none" stroke="#303030" stroke-width="2.6"/>
<text x="818.0" y="333.0" font-family="Liberation Sans" font-size="23.98" font-weight="normal" fill="#000" text-anchor="start" textLength="174.0" lengthAdjust="spacingAndGlyphs">Selected Range</text>
<rect x="804.5" y="348.0" width="68.0" height="42.0" fill="#fff" />
<rect x="804.5" y="348.0" width="68.0" height="2.0" fill="#000" />
<rect x="804.5" y="348.0" width="2.0" height="42.0" fill="#000" />
<rect x="804.5" y="388.0" width="68.0" height="2.0" fill="#000" />
<rect x="870.5" y="348.0" width="2.0" height="42.0" fill="#000" />
<text x="867.0" y="375.0" font-family="Liberation Sans" font-size="23.98" font-weight="normal" fill="#000" text-anchor="end">1</text>
<rect x="910.0" y="348.0" width="66.7" height="42.0" fill="#fff" />
<rect x="910.0" y="348.0" width="66.7" height="2.0" fill="#000" />
<rect x="910.0" y="348.0" width="2.0" height="42.0" fill="#000" />
<rect x="910.0" y="388.0" width="66.7" height="2.0" fill="#000" />
<rect x="974.7" y="348.0" width="2.0" height="42.0" fill="#000" />
<text x="971.2" y="375.0" font-family="Liberation Sans" font-size="23.98" font-weight="normal" fill="#000" text-anchor="end">78</text>
<text x="887.5" y="374.0" font-family="Liberation Sans" font-size="23.98" font-weight="normal" fill="#000" text-anchor="middle" textLength="7.0" lengthAdjust="spacingAndGlyphs">-</text>
<rect x="798.0" y="468.0" width="175.0" height="48.7" fill="#000" />
<rect x="800.0" y="470.0" width="171.0" height="44.7" fill="#d4d0c8" />
<rect x="800.0" y="470.0" width="171.0" height="1.5" fill="#fff" />
<rect x="800.0" y="470.0" width="1.5" height="44.7" fill="#fff" />
<rect x="800.0" y="513.2" width="171.0" height="1.5" fill="#404040" />
<rect x="969.5" y="470.0" width="1.5" height="44.7" fill="#404040" />
<rect x="801.5" y="511.7" width="168.0" height="1.5" fill="#808080" />
<rect x="968.0" y="471.5" width="1.5" height="41.7" fill="#808080" />
<rect x="805" y="475" width="161" height="34.7" fill="none" stroke="#000" stroke-width="1.3" stroke-dasharray="1.4,1.4"/>
<text x="830.0" y="499.0" font-family="Liberation Sans" font-size="24.71" font-weight="normal" fill="#000" text-anchor="start" textLength="108.0" lengthAdjust="spacingAndGlyphs">Prev. PCB</text>
<rect x="846.0" y="503.0" width="10.0" height="1.5" fill="#000" />
<rect x="783.5" y="559.0" width="214.0" height="1.5" fill="#808080" />
<rect x="783.5" y="559.0" width="1.5" height="166.0" fill="#808080" />
<rect x="785.0" y="560.5" width="212.5" height="1.5" fill="#fff" />
<rect x="785.0" y="560.5" width="1.5" height="164.5" fill="#fff" />
<rect x="783.5" y="723.5" width="214.0" height="1.5" fill="#808080" />
<rect x="996.0" y="559.0" width="1.5" height="166.0" fill="#808080" />
<rect x="783.5" y="725.0" width="215.5" height="1.5" fill="#fff" />
<rect x="997.5" y="559.0" width="1.5" height="167.5" fill="#fff" />
<rect x="795.0" y="545.0" width="131.0" height="22.0" fill="#c0c0c0" />
<text x="805.0" y="565.7" font-family="Liberation Sans" font-size="22.82" font-weight="normal" fill="#000" text-anchor="start" textLength="109.0" lengthAdjust="spacingAndGlyphs">Array PCB</text>
<rect x="805.0" y="569.0" width="13.0" height="1.5" fill="#000" />
<text x="798.0" y="608.0" font-family="Liberation Sans" font-size="23.69" font-weight="normal" fill="#000" text-anchor="start" textLength="86.0" lengthAdjust="spacingAndGlyphs">Current :</text>
<text x="894.0" y="608.0" font-family="Liberation Sans" font-size="23.69" font-weight="normal" fill="#000" text-anchor="start" textLength="12.0" lengthAdjust="spacingAndGlyphs">0</text>
<text x="820.0" y="637.0" font-family="Liberation Sans" font-size="23.69" font-weight="normal" fill="#000" text-anchor="start" textLength="53.0" lengthAdjust="spacingAndGlyphs">Total</text>
<text x="881.0" y="637.0" font-family="Liberation Sans" font-size="23.69" font-weight="normal" fill="#000" text-anchor="start" textLength="4.0" lengthAdjust="spacingAndGlyphs">:</text>
<text x="891.0" y="637.0" font-family="Liberation Sans" font-size="23.69" font-weight="normal" fill="#000" text-anchor="start">1</text>
<text x="910.5" y="637.0" font-family="Liberation Sans" font-size="23.69" font-weight="normal" fill="#000" text-anchor="start" textLength="26.5" lengthAdjust="spacingAndGlyphs">ea</text>
<rect x="783.5" y="753.0" width="214.0" height="1.5" fill="#808080" />
<rect x="783.5" y="753.0" width="1.5" height="90.0" fill="#808080" />
<rect x="785.0" y="754.5" width="212.5" height="1.5" fill="#fff" />
<rect x="785.0" y="754.5" width="1.5" height="88.5" fill="#fff" />
<rect x="783.5" y="841.5" width="214.0" height="1.5" fill="#808080" />
<rect x="996.0" y="753.0" width="1.5" height="90.0" fill="#808080" />
<rect x="783.5" y="843.0" width="215.5" height="1.5" fill="#fff" />
<rect x="997.5" y="753.0" width="1.5" height="91.5" fill="#fff" />
<rect x="796.0" y="740.0" width="180.0" height="22.0" fill="#c0c0c0" />
<text x="800.0" y="760.0" font-family="Liberation Sans" font-size="24.71" font-weight="normal" fill="#000" text-anchor="start" textLength="172.0" lengthAdjust="spacingAndGlyphs">Operation mode</text>
<rect x="912.0" y="764.0" width="20.0" height="1.5" fill="#000" />
<rect x="794.0" y="780.7" width="194.0" height="42.0" fill="#fff" />
<rect x="794.0" y="780.7" width="194.0" height="2.0" fill="#000" />
<rect x="794.0" y="780.7" width="2.0" height="42.0" fill="#000" />
<rect x="794.0" y="820.7" width="194.0" height="2.0" fill="#000" />
<rect x="986.0" y="780.7" width="2.0" height="42.0" fill="#000" />
<text x="801.7" y="810.7" font-family="Liberation Sans" font-size="25.15" font-weight="normal" fill="#000" text-anchor="start" textLength="77.0" lengthAdjust="spacingAndGlyphs">Normal</text>
<rect x="956.0" y="784.0" width="29.0" height="35.0" fill="#d4d0c8" />
<rect x="956.0" y="784.0" width="29.0" height="1.5" fill="#fff" />
<rect x="956.0" y="784.0" width="1.5" height="35.0" fill="#fff" />
<rect x="956.0" y="817.5" width="29.0" height="1.5" fill="#404040" />
<rect x="983.5" y="784.0" width="1.5" height="35.0" fill="#404040" />
<rect x="957.5" y="816.0" width="26.0" height="1.5" fill="#808080" />
<rect x="982.0" y="785.5" width="1.5" height="32.0" fill="#808080" />
<path d="M964,797 L977,797 L970.5,805 Z" fill="#000"/>
<rect x="808.0" y="886.7" width="23.5" height="23.5" fill="#fff" />
<rect x="808.0" y="886.7" width="23.5" height="1.6" fill="#808080" />
<rect x="808.0" y="886.7" width="1.6" height="23.5" fill="#808080" />
<rect x="809.6" y="888.3" width="21.0" height="1.6" fill="#404040" />
<rect x="809.6" y="888.3" width="1.6" height="21.0" fill="#404040" />
<rect x="808.0" y="908.7" width="23.5" height="1.5" fill="#fff" />
<rect x="830.0" y="886.7" width="1.5" height="23.5" fill="#fff" />
<rect x="810.0" y="907.2" width="20.0" height="1.5" fill="#d4d0c8" />
<rect x="828.5" y="889.7" width="1.5" height="19.0" fill="#d4d0c8" />
<text x="836.7" y="906.7" font-family="Liberation Sans" font-size="26.60" font-weight="normal" fill="#000" text-anchor="start" textLength="118.0" lengthAdjust="spacingAndGlyphs">Dump Stop</text>
<rect x="808.0" y="926.7" width="23.5" height="23.5" fill="#fff" />
<rect x="808.0" y="926.7" width="23.5" height="1.6" fill="#808080" />
<rect x="808.0" y="926.7" width="1.6" height="23.5" fill="#808080" />
<rect x="809.6" y="928.3" width="21.0" height="1.6" fill="#404040" />
<rect x="809.6" y="928.3" width="1.6" height="21.0" fill="#404040" />
<rect x="808.0" y="948.7" width="23.5" height="1.5" fill="#fff" />
<rect x="830.0" y="926.7" width="1.5" height="23.5" fill="#fff" />
<rect x="810.0" y="947.2" width="20.0" height="1.5" fill="#d4d0c8" />
<rect x="828.5" y="929.7" width="1.5" height="19.0" fill="#d4d0c8" />
<text x="836.7" y="946.7" font-family="Liberation Sans" font-size="26.60" font-weight="normal" fill="#000" text-anchor="start" textLength="127.0" lengthAdjust="spacingAndGlyphs">Before ANC</text>
<rect x="23.5" y="846.7" width="243.2" height="1.5" fill="#808080" />
<rect x="23.5" y="846.7" width="1.5" height="90.0" fill="#808080" />
<rect x="25.0" y="848.2" width="241.7" height="1.5" fill="#fff" />
<rect x="25.0" y="848.2" width="1.5" height="88.5" fill="#fff" />
<rect x="23.5" y="935.2" width="243.2" height="1.5" fill="#808080" />
<rect x="265.2" y="846.7" width="1.5" height="90.0" fill="#808080" />
<rect x="23.5" y="936.7" width="244.7" height="1.5" fill="#fff" />
<rect x="266.7" y="846.7" width="1.5" height="91.5" fill="#fff" />
<rect x="36.0" y="832.0" width="146.0" height="22.0" fill="#c0c0c0" />
<text x="45.0" y="854.0" font-family="Liberation Sans" font-size="25.15" font-weight="normal" fill="#000" text-anchor="start" textLength="135.0" lengthAdjust="spacingAndGlyphs">Speed Ratio</text>
<rect x="45.0" y="858.0" width="14.0" height="1.5" fill="#000" />
<text x="128.0" y="882.7" font-family="Liberation Sans" font-size="25.15" font-weight="normal" fill="#000" text-anchor="start" textLength="57.0" lengthAdjust="spacingAndGlyphs">100%</text>
<text x="38.3" y="911.7" font-family="Liberation Sans" font-size="24.27" font-weight="normal" fill="#000" text-anchor="start" textLength="23.4" lengthAdjust="spacingAndGlyphs">30</text>
<text x="218.3" y="911.7" font-family="Liberation Sans" font-size="24.27" font-weight="normal" fill="#000" text-anchor="start" textLength="36.7" lengthAdjust="spacingAndGlyphs">100</text>
<rect x="73.3" y="888.3" width="140.0" height="31.7" fill="url(#dith)" />
<rect x="73.3" y="888.3" width="28.4" height="31.7" fill="#d4d0c8" />
<rect x="73.3" y="888.3" width="28.4" height="1.5" fill="#fff" />
<rect x="73.3" y="888.3" width="1.5" height="31.7" fill="#fff" />
<rect x="73.3" y="918.5" width="28.4" height="1.5" fill="#404040" />
<rect x="100.2" y="888.3" width="1.5" height="31.7" fill="#404040" />
<rect x="74.8" y="917.0" width="25.4" height="1.5" fill="#808080" />
<rect x="98.7" y="889.8" width="1.5" height="28.7" fill="#808080" />
<path d="M83,904 L90,897 L90,911 Z" fill="#000"/>
<rect x="156.7" y="888.3" width="26.6" height="31.7" fill="#d4d0c8" />
<rect x="156.7" y="888.3" width="26.6" height="1.5" fill="#fff" />
<rect x="156.7" y="888.3" width="1.5" height="31.7" fill="#fff" />
<rect x="156.7" y="918.5" width="26.6" height="1.5" fill="#404040" />
<rect x="181.8" y="888.3" width="1.5" height="31.7" fill="#404040" />
<rect x="158.2" y="917.0" width="23.6" height="1.5" fill="#808080" />
<rect x="180.3" y="889.8" width="1.5" height="28.7" fill="#808080" />
<rect x="185.0" y="888.3" width="28.3" height="31.7" fill="#d4d0c8" />
<rect x="185.0" y="888.3" width="28.3" height="1.5" fill="#fff" />
<rect x="185.0" y="888.3" width="1.5" height="31.7" fill="#fff" />
<rect x="185.0" y="918.5" width="28.3" height="1.5" fill="#404040" />
<rect x="211.8" y="888.3" width="1.5" height="31.7" fill="#404040" />
<rect x="186.5" y="917.0" width="25.3" height="1.5" fill="#808080" />
<rect x="210.3" y="889.8" width="1.5" height="28.7" fill="#808080" />
<path d="M203,904 L196,897 L196,911 Z" fill="#000"/>
<rect x="528.3" y="842.7" width="156.7" height="77.3" fill="#d4d0c8" />
<rect x="528.3" y="842.7" width="156.7" height="1.5" fill="#fff" />
<rect x="528.3" y="842.7" width="1.5" height="77.3" fill="#fff" />
<rect x="528.3" y="918.5" width="156.7" height="1.5" fill="#404040" />
<rect x="683.5" y="842.7" width="1.5" height="77.3" fill="#404040" />
<rect x="529.8" y="917.0" width="153.7" height="1.5" fill="#808080" />
<rect x="682.0" y="844.2" width="1.5" height="74.3" fill="#808080" />
<text x="605.0" y="890.0" font-family="Liberation Sans" font-size="27.18" font-weight="normal" fill="#000" text-anchor="middle" textLength="115.0" lengthAdjust="spacingAndGlyphs">Cycle Stop</text>
<rect x="528.3" y="932.7" width="156.7" height="88.3" fill="#d4d0c8" />
<rect x="528.3" y="932.7" width="156.7" height="1.5" fill="#fff" />
<rect x="528.3" y="932.7" width="1.5" height="88.3" fill="#fff" />
<rect x="528.3" y="1019.5" width="156.7" height="1.5" fill="#404040" />
<rect x="683.5" y="932.7" width="1.5" height="88.3" fill="#404040" />
<rect x="529.8" y="1018.0" width="153.7" height="1.5" fill="#808080" />
<rect x="682.0" y="934.2" width="1.5" height="85.3" fill="#808080" />
<text x="605.5" y="985.0" font-family="Liberation Sans" font-size="26.60" font-weight="normal" fill="#000" text-anchor="middle" textLength="61.0" lengthAdjust="spacingAndGlyphs">Close</text>
<rect x="696.7" y="931.7" width="70.0" height="88.3" fill="#000" />
<rect x="698.2" y="933.2" width="67.0" height="85.3" fill="#fff" />
<rect x="700.2" y="935.2" width="65.0" height="83.3" fill="#808080" />
<rect x="700.2" y="935.2" width="63.0" height="81.3" fill="#c0c0c0" />
<path d="M713,956.7 L750,975 L713,993.3 Z" fill="#0000ff"/>
<path d="M713,993.3 L750,975" stroke="#fff" stroke-width="1.5"/>
<rect x="0.0" y="1035.0" width="1440.0" height="45.0" fill="#d4d0c8" />
<rect x="0.0" y="1034.5" width="1018.8" height="3.5" fill="#404040" />
<rect x="1018.8" y="1034.5" width="421.2" height="2.0" fill="#1a1a1a" />
<rect x="14.5" y="1038.0" width="1.5" height="38.0" fill="#808080" />
<text x="17.3" y="1070.4" font-family="Liberation Serif" font-size="35.57" font-weight="normal" fill="#000" text-anchor="start" textLength="81.0" lengthAdjust="spacingAndGlyphs" stroke="#000" stroke-width="0.9">Ready</text>
<rect x="535.0" y="1040.0" width="58.0" height="1.5" fill="#808080" />
<rect x="535.0" y="1040.0" width="1.5" height="38.0" fill="#808080" />
<rect x="535.0" y="1077.0" width="58.0" height="1.5" fill="#fff" />
<rect x="591.5" y="1040.0" width="1.5" height="38.0" fill="#fff" />
<rect x="596.0" y="1040.0" width="79.0" height="1.5" fill="#808080" />
<rect x="596.0" y="1040.0" width="1.5" height="38.0" fill="#808080" />
<rect x="596.0" y="1077.0" width="79.0" height="1.5" fill="#fff" />
<rect x="673.5" y="1040.0" width="1.5" height="38.0" fill="#fff" />
<rect x="677.0" y="1040.0" width="59.0" height="1.5" fill="#808080" />
<rect x="677.0" y="1040.0" width="1.5" height="38.0" fill="#808080" />
<rect x="677.0" y="1077.0" width="59.0" height="1.5" fill="#fff" />
<rect x="734.5" y="1040.0" width="1.5" height="38.0" fill="#fff" />
<rect x="738.0" y="1040.0" width="77.0" height="1.5" fill="#808080" />
<rect x="738.0" y="1040.0" width="1.5" height="38.0" fill="#808080" />
<rect x="738.0" y="1077.0" width="77.0" height="1.5" fill="#fff" />
<rect x="813.5" y="1040.0" width="1.5" height="38.0" fill="#fff" />
<rect x="817.0" y="1040.0" width="57.0" height="1.5" fill="#808080" />
<rect x="817.0" y="1040.0" width="1.5" height="38.0" fill="#808080" />
<rect x="817.0" y="1077.0" width="57.0" height="1.5" fill="#fff" />
<rect x="872.5" y="1040.0" width="1.5" height="38.0" fill="#fff" />
<rect x="877.0" y="1040.0" width="78.0" height="1.5" fill="#808080" />
<rect x="877.0" y="1040.0" width="1.5" height="38.0" fill="#808080" />
<rect x="877.0" y="1077.0" width="78.0" height="1.5" fill="#fff" />
<rect x="953.5" y="1040.0" width="1.5" height="38.0" fill="#fff" />
<rect x="957.0" y="1040.0" width="38.0" height="1.5" fill="#808080" />
<rect x="957.0" y="1040.0" width="1.5" height="38.0" fill="#808080" />
<rect x="957.0" y="1077.0" width="38.0" height="1.5" fill="#fff" />
<rect x="993.5" y="1040.0" width="1.5" height="38.0" fill="#fff" />
<rect x="997.0" y="1040.0" width="153.0" height="1.5" fill="#808080" />
<rect x="997.0" y="1040.0" width="1.5" height="38.0" fill="#808080" />
<rect x="997.0" y="1077.0" width="153.0" height="1.5" fill="#fff" />
<rect x="1148.5" y="1040.0" width="1.5" height="38.0" fill="#fff" />
<rect x="1153.0" y="1040.0" width="37.0" height="1.5" fill="#808080" />
<rect x="1153.0" y="1040.0" width="1.5" height="38.0" fill="#808080" />
<rect x="1153.0" y="1077.0" width="37.0" height="1.5" fill="#fff" />
<rect x="1188.5" y="1040.0" width="1.5" height="38.0" fill="#fff" />
<rect x="1193.0" y="1040.0" width="153.0" height="1.5" fill="#808080" />
<rect x="1193.0" y="1040.0" width="1.5" height="38.0" fill="#808080" />
<rect x="1193.0" y="1077.0" width="153.0" height="1.5" fill="#fff" />
<rect x="1344.5" y="1040.0" width="1.5" height="38.0" fill="#fff" />
<rect x="1349.0" y="1040.0" width="42.0" height="1.5" fill="#808080" />
<rect x="1349.0" y="1040.0" width="1.5" height="38.0" fill="#808080" />
<rect x="1349.0" y="1077.0" width="42.0" height="1.5" fill="#fff" />
<rect x="1389.5" y="1040.0" width="1.5" height="38.0" fill="#fff" />
<rect x="1394.0" y="1040.0" width="44.0" height="1.5" fill="#808080" />
<rect x="1394.0" y="1040.0" width="1.5" height="38.0" fill="#808080" />
<rect x="1394.0" y="1077.0" width="44.0" height="1.5" fill="#fff" />
<rect x="1436.5" y="1040.0" width="1.5" height="38.0" fill="#fff" />
<text x="541.7" y="1070.0" font-family="Liberation Serif" font-size="35.57" font-weight="normal" fill="#000" text-anchor="start" textLength="45.0" lengthAdjust="spacingAndGlyphs" stroke="#000" stroke-width="0.8">H1 :</text>
<text x="598.0" y="1070.0" font-family="Liberation Serif" font-size="35.57" font-weight="normal" fill="#000" text-anchor="start" textLength="64.0" lengthAdjust="spacingAndGlyphs" stroke="#000" stroke-width="0.8">None</text>
<text x="683.0" y="1070.0" font-family="Liberation Serif" font-size="35.57" font-weight="normal" fill="#000" text-anchor="start" textLength="45.0" lengthAdjust="spacingAndGlyphs" stroke="#000" stroke-width="0.8">H2 :</text>
<text x="740.0" y="1070.0" font-family="Liberation Serif" font-size="35.57" font-weight="normal" fill="#000" text-anchor="start" textLength="64.0" lengthAdjust="spacingAndGlyphs" stroke="#000" stroke-width="0.8">None</text>
<text x="821.7" y="1070.0" font-family="Liberation Serif" font-size="35.57" font-weight="normal" fill="#000" text-anchor="start" textLength="45.0" lengthAdjust="spacingAndGlyphs" stroke="#000" stroke-width="0.8">H3 :</text>
<text x="880.0" y="1070.0" font-family="Liberation Serif" font-size="35.57" font-weight="normal" fill="#000" text-anchor="start" textLength="63.0" lengthAdjust="spacingAndGlyphs" stroke="#000" stroke-width="0.8">None</text>
<text x="961.7" y="1070.0" font-family="Liberation Serif" font-size="35.57" font-weight="normal" fill="#000" text-anchor="start" textLength="30.0" lengthAdjust="spacingAndGlyphs" stroke="#000" stroke-width="0.8">X :</text>
<text x="1001.7" y="1070.0" font-family="Liberation Serif" font-size="35.57" font-weight="normal" fill="#000" text-anchor="start" textLength="78.3" lengthAdjust="spacingAndGlyphs" stroke="#000" stroke-width="0.8">0. 000</text>
<text x="1157.8" y="1070.0" font-family="Liberation Serif" font-size="35.57" font-weight="normal" fill="#000" text-anchor="start" textLength="30.0" lengthAdjust="spacingAndGlyphs" stroke="#000" stroke-width="0.8">Y :</text>
<text x="1197.8" y="1070.0" font-family="Liberation Serif" font-size="35.57" font-weight="normal" fill="#000" text-anchor="start" textLength="78.9" lengthAdjust="spacingAndGlyphs" stroke="#000" stroke-width="0.8">0. 000</text>
<path d="M262.7,211.3 L391.5,211.3 A7.7,7.7 0 0 1 399.2,219.0 L399.2,249.0 A7.7,7.7 0 0 1 391.5,256.7 L262.7,256.7 A7.7,7.7 0 0 1 255.0,249.0 L255.0,248.7 L193.3,255.8 L255.0,237.5 L255.0,219.0 A7.7,7.7 0 0 1 262.7,211.3 Z" fill="#00cc99" stroke="#000" stroke-width="1.8" stroke-miterlimit="4"/>
<path d="M602.7,211.3 L732.0,211.3 A7.7,7.7 0 0 1 739.7,219.0 L739.7,237.5 L794.2,253.0 L739.7,249.2 L739.7,249.0 A7.7,7.7 0 0 1 732.0,256.7 L602.7,256.7 A7.7,7.7 0 0 1 595.0,249.0 L595.0,219.0 A7.7,7.7 0 0 1 602.7,211.3 Z" fill="#00cc99" stroke="#000" stroke-width="1.8" stroke-miterlimit="4"/>
<path d="M1045.1,279.5 L1174.1,279.5 A7.6,7.6 0 0 1 1181.8,287.1 L1181.8,316.6 A7.6,7.6 0 0 1 1174.1,324.2 L1045.1,324.2 A7.6,7.6 0 0 1 1037.5,316.6 L1037.5,297.5 L881.2,299.2 L1037.5,287.0 L1037.5,287.1 A7.6,7.6 0 0 1 1045.1,279.5 Z" fill="#00cc99" stroke="#000" stroke-width="1.8" stroke-miterlimit="4"/>
<path d="M1045.1,336.2 L1199.9,336.2 A7.6,7.6 0 0 1 1207.5,343.8 L1207.5,373.2 A7.6,7.6 0 0 1 1199.9,380.8 L1045.1,380.8 A7.6,7.6 0 0 1 1037.5,373.2 L1037.5,353.8 L983.8,333.8 L1037.5,343.0 L1037.5,343.8 A7.6,7.6 0 0 1 1045.1,336.2 Z" fill="#00cc99" stroke="#000" stroke-width="1.8" stroke-miterlimit="4"/>
<path d="M1045.4,460.0 L1173.8,460.0 A7.9,7.9 0 0 1 1181.7,467.9 L1181.7,498.4 A7.9,7.9 0 0 1 1173.8,506.2 L1045.4,506.2 A7.9,7.9 0 0 1 1037.5,498.4 L1037.5,479.2 L954.2,480.2 L1037.5,468.3 L1037.5,467.9 A7.9,7.9 0 0 1 1045.4,460.0 Z" fill="#00cc99" stroke="#000" stroke-width="1.8" stroke-miterlimit="4"/>
<path d="M1056.7,540.0 L1162.5,540.0 A19.2,19.2 0 0 1 1181.7,559.2 L1181.7,633.8 A19.2,19.2 0 0 1 1162.5,653.0 L1056.7,653.0 A19.2,19.2 0 0 1 1037.5,633.8 L1037.5,586.5 L927.0,557.3 L1037.5,558.3 L1037.5,559.2 A19.2,19.2 0 0 1 1056.7,540.0 Z" fill="#00cc99" stroke="#000" stroke-width="1.8" stroke-miterlimit="4"/>
<path d="M1045.2,755.3 L1174.0,755.3 A7.7,7.7 0 0 1 1181.7,763.0 L1181.7,793.1 A7.7,7.7 0 0 1 1174.0,800.8 L1045.2,800.8 A7.7,7.7 0 0 1 1037.5,793.1 L1037.5,773.7 L975.8,753.7 L1037.5,762.5 L1037.5,763.0 A7.7,7.7 0 0 1 1045.2,755.3 Z" fill="#00cc99" stroke="#000" stroke-width="1.8" stroke-miterlimit="4"/>
<path d="M240.1,835.0 L369.5,835.0 A7.8,7.8 0 0 1 377.3,842.8 L377.3,872.8 A7.8,7.8 0 0 1 369.5,880.6 L240.1,880.6 A7.8,7.8 0 0 1 232.3,872.8 L232.3,853.5 L179.5,849.4 L232.3,842.6 L232.3,842.8 A7.8,7.8 0 0 1 240.1,835.0 Z" fill="#00cc99" stroke="#000" stroke-width="1.8" stroke-miterlimit="4"/>
<path d="M353.3,903.0 L427.5,903.0 L537.2,887.9 L460.0,903.0 L482.6,903.0 A7.7,7.7 0 0 1 490.3,910.7 L490.3,940.6 A7.7,7.7 0 0 1 482.6,948.3 L353.3,948.3 A7.7,7.7 0 0 1 345.6,940.6 L345.6,910.7 A7.7,7.7 0 0 1 353.3,903.0 Z" fill="#00cc99" stroke="#000" stroke-width="1.8" stroke-miterlimit="4"/>
<path d="M1055.9,856.7 L1185.1,856.7 A7.9,7.9 0 0 1 1193.0,864.6 L1193.0,895.4 A7.9,7.9 0 0 1 1185.1,903.3 L1055.9,903.3 A7.9,7.9 0 0 1 1048.0,895.4 L1048.0,895.0 L965.0,899.3 L1048.0,883.3 L1048.0,864.6 A7.9,7.9 0 0 1 1055.9,856.7 Z" fill="#00cc99" stroke="#000" stroke-width="1.8" stroke-miterlimit="4"/>
<path d="M1059.6,936.7 L1181.4,936.7 A11.6,11.6 0 0 1 1193.0,948.3 L1193.0,993.4 A11.6,11.6 0 0 1 1181.4,1005.0 L1059.6,1005.0 A11.6,11.6 0 0 1 1048.0,993.4 L1048.0,965.0 L965.0,935.0 L1048.0,948.3 L1048.0,948.3 A11.6,11.6 0 0 1 1059.6,936.7 Z" fill="#00cc99" stroke="#000" stroke-width="1.8" stroke-miterlimit="4"/>
<path d="M259.25,152.3 A71,47.1 0 1 0 239.1,141.6 L172,208 Z" fill="#ffff00" stroke="#000" stroke-width="1.8" stroke-miterlimit="4"/>
</svg>
</body></html>
